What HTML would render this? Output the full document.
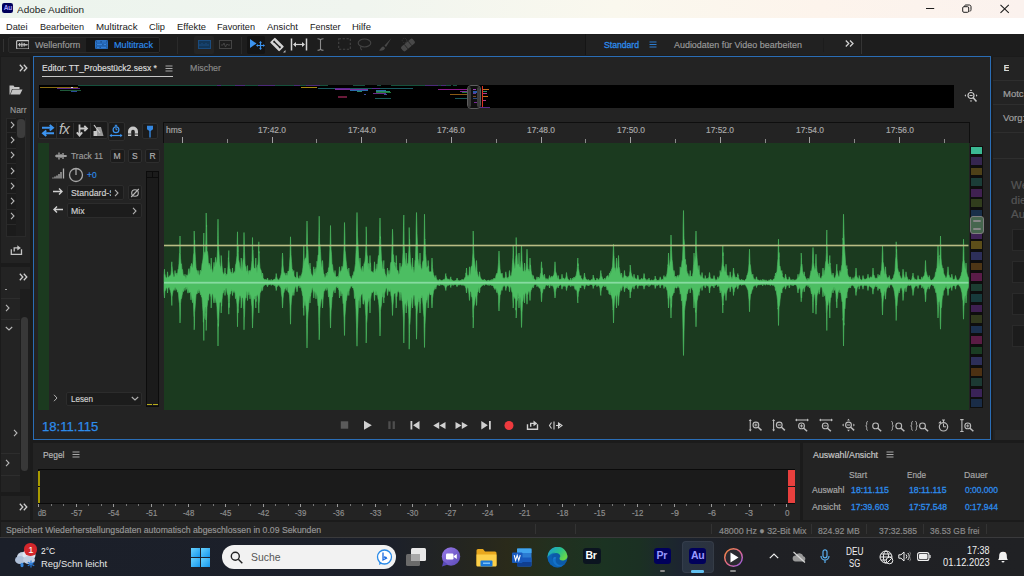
<!DOCTYPE html>
<html><head><meta charset="utf-8"><title>Adobe Audition</title>
<style>
*{box-sizing:border-box;margin:0;padding:0}
html,body{width:1024px;height:576px;overflow:hidden;background:#1b1b1b;font-family:"Liberation Sans",sans-serif;}
.a{position:absolute}
.t{position:absolute;white-space:nowrap;line-height:1;-webkit-text-stroke:0.18px}
#titlebar .t,#menubar .t,.ns{-webkit-text-stroke:0}
#titlebar{left:0;top:0;width:1024px;height:18px;background:linear-gradient(90deg,#ecf4ed 0%,#f0f5ef 35%,#faf8ee 60%,#fdf4ec 80%,#fbf2ee 100%)}
#menubar{left:0;top:18px;width:1024px;height:16px;background:#fff}
#menubar .t{font-size:9.6px;color:#1a1a1a;top:3.5px}
#toolbar{left:0;top:34px;width:1024px;height:22px;background:#1d1d1d}
.panel{background:#232323}
.lbl{font-size:9.5px;color:#a8a8a8}
.blue{color:#2d8ceb;-webkit-text-stroke:0.3px}
</style></head><body>
<!-- title bar -->
<div class="a" id="titlebar">
  <div class="a" style="left:1.900px;top:3.400px;width:11px;height:9.800px;background:#00005b;border-radius:2.200px"></div>
  <div class="t" style="left:3.700px;top:5.100px;font-size:6.600px;font-weight:bold;color:#a8a0ff;letter-spacing:-.3px">Au</div>
  <div class="t" style="transform:scaleX(1.028);transform-origin:0 0;left:17px;top:4.600px;font-size:9.700px;color:#222">Adobe Audition</div>
  <svg class="a" style="left:920px;top:0" width="104" height="18" viewBox="920 0 104 18" fill="none" stroke="#1e1e1e" stroke-width="1">
    <path d="M926 8.500h8.200"/>
    <rect x="962.700" y="6.700" width="6" height="5.600" rx="1.200"/><path d="M964.500 6.500c0-1 0.500-1.500 1.500-1.500h3.300c1 0 1.700 0.700 1.700 1.700v3c0 1-0.500 1.500-1.500 1.500"/>
    <path d="M1000.500 4.800l8.300 8M1008.800 4.800l-8.300 8" stroke-width="1.100"/>
  </svg>
</div>
<!-- menu bar -->
<div class="a" id="menubar">
  <div class="t" style="transform:scaleX(0.960);transform-origin:0 0;left:6px">Datei</div>
  <div class="t" style="transform:scaleX(0.948);transform-origin:0 0;left:39.500px">Bearbeiten</div>
  <div class="t" style="transform:scaleX(1.011);transform-origin:0 0;left:95.500px">Multitrack</div>
  <div class="t" style="transform:scaleX(0.968);transform-origin:0 0;left:148.500px">Clip</div>
  <div class="t" style="transform:scaleX(0.976);transform-origin:0 0;left:176.500px">Effekte</div>
  <div class="t" style="transform:scaleX(0.950);transform-origin:0 0;left:217px">Favoriten</div>
  <div class="t" style="transform:scaleX(0.985);transform-origin:0 0;left:267px">Ansicht</div>
  <div class="t" style="transform:scaleX(0.938);transform-origin:0 0;left:310px">Fenster</div>
  <div class="t" style="transform:scaleX(0.989);transform-origin:0 0;left:352px">Hilfe</div>
</div>
<!-- toolbar -->
<div class="a" id="toolbar">
  <div class="a" style="left:3px;top:5px;width:1px;height:13px;background:#333"></div>
  <div class="a" style="left:7.500px;top:2.500px;width:152.500px;height:16.500px;background:#202020;border:1px solid #2b2b2b;border-radius:2px"></div>
  <div class="a" style="left:86px;top:3.500px;width:73px;height:14.500px;background:#151515;border-radius:1px"></div>
  <!-- waveform icon -->
  <svg class="a" style="left:15.500px;top:5.800px" width="13.600" height="9.600" viewBox="0 0 15 11" preserveAspectRatio="none"><rect x="0.7" y="0.7" width="13.6" height="9.6" rx="1" fill="none" stroke="#c8c8c8" stroke-width="1.2"/><path d="M2 5.5h11M4 3.5v4M6.5 3v5M9 3.5v4M11 4.5v2" stroke="#c8c8c8" stroke-width="1.2"/></svg>
  <div class="t" style="transform:scaleX(0.945);transform-origin:0 0;left:34.700px;top:6px;font-size:9.5px;color:#9a9a9a">Wellenform</div>
  <!-- multitrack icon -->
  <svg class="a" style="left:94.500px;top:5.800px" width="13.600" height="9.600" viewBox="0 0 15 11" preserveAspectRatio="none"><rect x="0.500" y="0.500" width="13.500" height="9.500" rx="1" fill="#1c4f8e" stroke="#2f80de" stroke-width="1"/><path d="M1 3.700h12.500M1 6.900h12.500" stroke="#2f80de" stroke-width="0.800"/><path d="M2 2.200h4M7.500 2.200h5M2 5.300h6M9.500 5.300h3M2 8.400h3M6.500 8.400h6" stroke="#3a8ae6" stroke-width="1.100"/></svg>
  <div class="t" style="transform:scaleX(0.959);transform-origin:0 0;left:113.500px;top:6px;font-size:9.5px;color:#2d8ceb">Multitrack</div>
  <div class="a" style="left:177px;top:3px;width:1px;height:17px;background:#2a2a2a"></div>
  <!-- spectral buttons -->
  <div class="a" style="left:194px;top:2px;width:20px;height:18px;background:#242424;border-radius:2px"></div>
  <svg class="a" style="left:198px;top:6px" width="13" height="9" viewBox="0 0 13 9"><rect x="0.5" y="0.5" width="12" height="8" fill="#123658" stroke="#1a4c80"/><path d="M2 6v-2M4 6v-3M6 6v-2M8 6v-3M10 6v-2" stroke="#1a4c80"/></svg>
  <svg class="a" style="left:219px;top:6px" width="13" height="9" viewBox="0 0 13 9"><rect x="0.5" y="0.5" width="12" height="8" fill="none" stroke="#444"/><path d="M2 5h2l1-2 1.5 4 1.5-3 1 1h2" stroke="#444" fill="none"/></svg>
  <div class="a" style="left:241px;top:3px;width:1px;height:17px;background:#2a2a2a"></div>
  <!-- move tool -->
  <div class="a" style="left:247px;top:2px;width:18px;height:18px;background:#141414;border-radius:2px"></div>
  <svg class="a" style="left:249px;top:4px" width="16" height="14" viewBox="0 0 16 14"><path d="M1 1v9l6.5-4.5z" fill="#3c94f0"/><path d="M11.5 4v7M8 7.5h7" stroke="#3c94f0" stroke-width="1.2"/><path d="M11.5 3l-1.5 1.8h3zM11.5 12l-1.5-1.8h3zM7 7.5l1.8-1.5v3zM16 7.5l-1.8-1.5v3z" fill="#3c94f0"/></svg>
  <!-- razor -->
  <svg class="a" style="left:270px;top:3px" width="16" height="16" viewBox="0 0 16 16"><g transform="rotate(45 7 7.5)"><rect x="0.5" y="4" width="13" height="7" rx="1" fill="#d4d4d4"/><path d="M3 7.5h8" stroke="#1d1d1d" stroke-width="1.4"/><circle cx="3" cy="7.5" r="1" fill="#1d1d1d"/><circle cx="11" cy="7.5" r="1" fill="#1d1d1d"/></g><path d="M15.5 13v2.5h-2.500z" fill="#bbb"/></svg>
  <!-- slip |<->| -->
  <svg class="a" style="left:290px;top:4px" width="18" height="13" viewBox="0 0 18 13"><path d="M1.5 0.500v12M16.500 0.500v12" stroke="#d4d4d4" stroke-width="1.500"/><path d="M4 6.500h10" stroke="#d4d4d4" stroke-width="1.200"/><path d="M3 6.500l3-2.500v5zM15 6.500l-3-2.500v5z" fill="#d4d4d4"/></svg>
  <!-- I-beam -->
  <svg class="a" style="left:316px;top:4px" width="9" height="13" viewBox="0 0 9 13"><path d="M1.500 0.800c1.500 0 3 0.400 3 1.500v8.400c0 1.100-1.500 1.500-3 1.500M7.500 0.800c-1.500 0-3 0.400-3 1.500M7.500 12.200c-1.500 0-3-0.400-3-1.500" fill="none" stroke="#8a8a8a" stroke-width="1.100"/></svg>
  <!-- marquee -->
  <svg class="a" style="left:338px;top:4px" width="13" height="12" viewBox="0 0 13 12"><rect x="0.700" y="0.700" width="11.600" height="10.600" fill="none" stroke="#444" stroke-width="1.100" stroke-dasharray="2.300 1.600"/></svg>
  <!-- lasso -->
  <svg class="a" style="left:357px;top:4px" width="15" height="13" viewBox="0 0 15 13"><ellipse cx="7.500" cy="5" rx="6.300" ry="4" fill="none" stroke="#444" stroke-width="1.100"/><path d="M4 8.500c-1 1.500 0 3 1 3.500" fill="none" stroke="#444" stroke-width="1.100"/></svg>
  <!-- brush -->
  <svg class="a" style="left:378px;top:3px" width="15" height="15" viewBox="0 0 15 15"><path d="M13.500 1l-7 7.500 1.500 1.500z" fill="#484848"/><path d="M5.500 9.500c-2 0-2.500 2-4.500 4 3 0.500 6-0.500 6-2.500z" fill="#484848"/></svg>
  <!-- band-aid -->
  <svg class="a" style="left:400px;top:3px" width="16" height="15" viewBox="0 0 16 15"><g transform="rotate(-40 8 8)"><rect x="0.500" y="5" width="15" height="6" rx="2" fill="#484848"/><path d="M5.500 5v6M10.500 5v6" stroke="#1d1d1d" stroke-width="0.700"/></g><circle cx="4.500" cy="3.500" r="2.300" fill="none" stroke="#3a3a3a" stroke-dasharray="1 1"/></svg>
  <!-- workspace -->
  <div class="a" style="left:586px;top:1px;width:274px;height:20px;background:#212121"></div><div class="a" style="left:585px;top:0;width:1.200px;height:21px;background:#151515"></div>
  <div class="t blue" style="transform:scaleX(0.908);transform-origin:0 0;left:604px;top:6px;font-size:9.500px;color:#2d8ceb">Standard</div>
  <svg class="a" style="left:649px;top:7px" width="8" height="7" viewBox="0 0 8 7"><path d="M0.500 1h7M0.500 3.500h7M0.500 6h7" stroke="#2d7dd2" stroke-width="1.100"/></svg>
  <div class="t" style="transform:scaleX(0.940);transform-origin:0 0;left:673.500px;top:6px;font-size:9.500px;color:#9a9a9a">Audiodaten für Video bearbeiten</div>
  <div class="a" style="left:823px;top:4px;width:1px;height:14px;background:#1c1c1c"></div>
  <svg class="a" style="left:845.200px;top:6.400px" width="9" height="7" viewBox="0 0 9 7"><path d="M0.800 0.500l3 3-3 3M5 0.500l3 3-3 3" fill="none" stroke="#d0d0d0" stroke-width="1.300"/></svg>
  <div class="a" style="left:860.500px;top:0;width:1.200px;height:20px;background:#343434"></div>
</div>

<!-- left strip -->
<div class="a panel" style="left:1px;top:57px;width:28.800px;height:206px"></div>
<div class="a panel" style="left:1px;top:267px;width:28.800px;height:225px"></div>
<div class="a panel" style="left:1px;top:495.500px;width:28.800px;height:24px"></div>
<svg class="a" style="left:18.500px;top:63.500px" width="9" height="8" viewBox="0 0 9 8"><path d="M0.800 0.800l3 3.200-3 3.200M4.800 0.800l3 3.200-3 3.200" fill="none" stroke="#d0d0d0" stroke-width="1.300"/></svg>
<svg class="a" style="left:8.500px;top:85px" width="14" height="10" viewBox="0 0 14 10"><path d="M0.500 9.500v-9h4l1 1.500h5v2h-7.500l-2 5.500z" fill="#c4c4c4"/><path d="M1.500 9.500l2-5h10l-2.500 5z" fill="#c4c4c4"/></svg>
<div class="a" style="left:9.500px;top:103px;width:17.500px;height:13px;overflow:hidden"><div class="t" style="transform:scaleX(0.893);transform-origin:0 0;left:0;top:1.500px;font-size:9.500px;color:#9a9a9a">Narr</div></div>
<div class="a" style="left:5.500px;top:117.500px;width:20px;height:119px;background:#1b1b1b;border:1px solid #2a2a2a"></div>
<div class="a" style="left:16px;top:118px;width:9px;height:118px;background:#1e1e1e"></div>
<div class="a" style="left:17px;top:118.500px;width:7.500px;height:19.500px;background:#3c3c3c;border-radius:3.500px"></div>
<svg class="a" style="left:10px;top:120.8px" width="5" height="8" viewBox="0 0 5 8" fill="none" stroke="#b8b8b8" stroke-width="1.100"><path d="M1 0.800l3 3.200-3 3.200"/></svg><div class="a" style="left:6.500px;top:132.2px;width:9.500px;height:1px;background:#292929"></div><svg class="a" style="left:10px;top:136.0px" width="5" height="8" viewBox="0 0 5 8" fill="none" stroke="#b8b8b8" stroke-width="1.100"><path d="M1 0.800l3 3.200-3 3.200"/></svg><div class="a" style="left:6.500px;top:147.5px;width:9.500px;height:1px;background:#292929"></div><svg class="a" style="left:10px;top:151.2px" width="5" height="8" viewBox="0 0 5 8" fill="none" stroke="#b8b8b8" stroke-width="1.100"><path d="M1 0.800l3 3.200-3 3.200"/></svg><div class="a" style="left:6.500px;top:162.8px;width:9.500px;height:1px;background:#292929"></div><svg class="a" style="left:10px;top:166.5px" width="5" height="8" viewBox="0 0 5 8" fill="none" stroke="#b8b8b8" stroke-width="1.100"><path d="M1 0.800l3 3.200-3 3.200"/></svg><div class="a" style="left:6.500px;top:178.0px;width:9.500px;height:1px;background:#292929"></div><svg class="a" style="left:10px;top:181.8px" width="5" height="8" viewBox="0 0 5 8" fill="none" stroke="#b8b8b8" stroke-width="1.100"><path d="M1 0.800l3 3.200-3 3.200"/></svg><div class="a" style="left:6.500px;top:193.2px;width:9.500px;height:1px;background:#292929"></div><svg class="a" style="left:10px;top:197.0px" width="5" height="8" viewBox="0 0 5 8" fill="none" stroke="#b8b8b8" stroke-width="1.100"><path d="M1 0.800l3 3.200-3 3.200"/></svg><div class="a" style="left:6.500px;top:208.5px;width:9.500px;height:1px;background:#292929"></div><svg class="a" style="left:10px;top:212.2px" width="5" height="8" viewBox="0 0 5 8" fill="none" stroke="#b8b8b8" stroke-width="1.100"><path d="M1 0.800l3 3.200-3 3.200"/></svg><div class="a" style="left:6.500px;top:223.8px;width:9.500px;height:1px;background:#292929"></div>
<svg class="a" style="left:10px;top:244px" width="14" height="12" viewBox="10 244 14 12" fill="none" stroke="#c4c4c4" stroke-width="1.300"><path d="M11.300 249.200v5.200h10.200v-5.200"/><path d="M14.200 251.500v-3.600h4"/><path d="M17.300 245.300l3.600 2.600-3.600 2.600z" fill="#c4c4c4" stroke="none"/></svg>
<div class="a" style="left:5px;top:289.200px;width:2px;height:1px;background:#9a9a9a"></div>
<!-- panel B -->
<svg class="a" style="left:18.500px;top:273px" width="9" height="8" viewBox="0 0 9 8"><path d="M0.800 0.800l3 3.200-3 3.200M4.800 0.800l3 3.200-3 3.200" fill="none" stroke="#d0d0d0" stroke-width="1.300"/></svg>
<div class="a" style="left:1px;top:298px;width:19px;height:1px;background:#2d2d2d"></div>
<div class="a" style="left:1px;top:319px;width:19px;height:1px;background:#2d2d2d"></div>
<div class="a" style="left:1px;top:453px;width:19px;height:1px;background:#2d2d2d"></div>
<div class="a" style="left:1px;top:474.500px;width:19px;height:1px;background:#2d2d2d"></div>
<div class="a" style="left:20px;top:289px;width:9.800px;height:203px;background:#1d1d1d"></div>
<div class="a" style="left:21px;top:317px;width:7px;height:154px;background:#383838;border-radius:3.500px"></div>
<svg class="a" style="left:5px;top:303.500px" width="5" height="8" viewBox="0 0 5 8" fill="none" stroke="#b8b8b8" stroke-width="1.100"><path d="M1 0.800l3 3.200-3 3.200"/></svg>
<svg class="a" style="left:4.500px;top:326px" width="8" height="5" viewBox="0 0 8 5" fill="none" stroke="#b8b8b8" stroke-width="1.100"><path d="M0.800 1l3.200 3 3.200-3"/></svg>
<svg class="a" style="left:13px;top:429px" width="5" height="8" viewBox="0 0 5 8" fill="none" stroke="#b8b8b8" stroke-width="1.100"><path d="M1 0.800l3 3.200-3 3.200"/></svg>
<svg class="a" style="left:5px;top:459px" width="5" height="8" viewBox="0 0 5 8" fill="none" stroke="#b8b8b8" stroke-width="1.100"><path d="M1 0.800l3 3.200-3 3.200"/></svg>
<!-- panel C -->
<svg class="a" style="left:18.500px;top:502.500px" width="9" height="8" viewBox="0 0 9 8"><path d="M0.800 0.800l3 3.200-3 3.200M4.800 0.800l3 3.200-3 3.200" fill="none" stroke="#d0d0d0" stroke-width="1.300"/></svg>


<!-- editor panel -->
<div class="a panel" style="left:33px;top:56px;width:958px;height:384px;border:1px solid #2a6db5"></div>
<!-- tabs -->
<div class="t" style="transform:scaleX(0.897);transform-origin:0 0;left:42px;top:63px;font-size:9.5px;color:#dcdcdc">Editor: TT_Probestück2.sesx *</div>
<div class="a" style="left:41.700px;top:75.500px;width:131px;height:1.700px;background:#c6c6c6"></div>
<svg class="a" style="left:165px;top:65px" width="8" height="7" viewBox="0 0 8 7"><path d="M0.500 1h7M0.500 3.500h7M0.500 6h7" stroke="#a8a8a8" stroke-width="1"/></svg>
<div class="t" style="transform:scaleX(0.932);transform-origin:0 0;left:190px;top:63px;font-size:9.5px;color:#8a8a8a">Mischer</div>
<!-- overview -->
<div class="a" style="left:39px;top:85px;width:915px;height:22.700px;background:#000"></div>
<svg class="a" style="left:39px;top:84px" width="915" height="25" viewBox="39 84 915 25" shape-rendering="crispEdges" stroke-width="1">
 <path d="M78 85.500H328M353 85.500H365M377 85.500H381M391 85.500H431M437 85.500H451M453 85.500H457" stroke="#15503c"/>
 <path d="M216.500 85.500H221M235 85.500H244.700M258 85.500H275M294 85.500H300M306 85.500H320M425 85.500H438M441 85.500H446" stroke="#4a2a78"/>
 <path d="M39.500 87H78" stroke="#8a6e14" stroke-width="1"/><path d="M71 87h1.500" stroke="#e0e0e0"/>
 <path d="M301 87.200H317" stroke="#a88a14" stroke-width="1.200"/>
 <path d="M318 88.200H413" stroke="#1a5a60"/><path d="M335 88.200H350M372 88.200H380" stroke="#5a2a90"/>
 <path d="M57 88.800H79.500" stroke="#5a2a8a"/><path d="M59.500 90.500H80.500" stroke="#1f5a3a"/><path d="M70.500 91.500H77" stroke="#2a4a9a"/>
 <path d="M335 89.500H368" stroke="#7a2a9a"/><path d="M438 89.500H468" stroke="#8a1a8a"/>
 <path d="M350 90.500H368M376 90.500H386" stroke="#2a6aa8"/><path d="M357 91.500H362M376 91.500H390" stroke="#2a8a6a"/>
 <path d="M376 92H391" stroke="#1f7a3a"/><path d="M373 93.800H386" stroke="#6a2a8a"/><path d="M364 94.500H366M384 94.500H387" stroke="#3a4a9a"/>
 <path d="M338 97H347" stroke="#6a1a3a" stroke-width="1.300"/><path d="M375 98.300H391" stroke="#1a5a5a"/>
 <path d="M450 94.200H468" stroke="#8a5a14"/><path d="M462 92H468" stroke="#1f7a3a"/><path d="M455 98.300H468" stroke="#1a5a5a"/><path d="M460 91H468" stroke="#7a2a9a"/>
 
 <path d="M483 89.500H489M483 96H488" stroke="#c86a1a"/><path d="M483 93H487M483 100H486" stroke="#b03a8a"/><path d="M479 107H490" stroke="#5a2a8a"/><path d="M483 91.500H487" stroke="#2a8a6a"/>
</svg>
<!-- overview handle -->
<div class="a" style="left:467px;top:84.500px;width:14.300px;height:24.500px;background:#101010;border:1.300px solid #5e5e5e;border-radius:4px"></div>
<div class="a" style="left:468.300px;top:86.500px;width:3px;height:20.500px;background:#3c3c3c;border-radius:1.500px"></div>
<div class="a" style="left:477.200px;top:86.500px;width:3px;height:20.500px;background:#3c3c3c;border-radius:1.500px"></div>
<div class="a" style="left:472.800px;top:89px;width:3.400px;height:1px;background:#a040b0"></div>
<div class="a" style="left:472.500px;top:90.500px;width:4px;height:2px;background:#2a5aa8"></div>
<div class="a" style="left:473px;top:93px;width:2.500px;height:1px;background:#6a3a9a"></div>
<div class="a" style="left:472.500px;top:95.500px;width:3.500px;height:1.500px;background:#7a4a2a"></div>
<div class="a" style="left:472.500px;top:98px;width:4px;height:1px;background:#2a4a7a"></div>
<div class="a" style="left:473.500px;top:102px;width:3px;height:1.200px;background:#7a2a9a"></div>
<div class="a" style="left:481.800px;top:86.200px;width:1.700px;height:20.700px;background:#dc3222"></div>
<!-- zoom nav icon -->
<svg class="a" style="left:964px;top:89px" width="15" height="15" viewBox="0 0 15 15" fill="none" stroke="#c8c8c8"><circle cx="7" cy="6.500" r="3" stroke-width="1.200"/><path d="M5.500 6.500h3" stroke-width="1"/><path d="M9.200 8.800l3.300 3.700" stroke-width="1.600"/><path d="M7 0.500l-1.300 1.500h2.600zM7 13l-1.300-1.500h2.600zM0.500 6.500l1.500-1.300v2.600zM13.500 6.500l-1.500-1.300v2.600z" fill="#c8c8c8" stroke="none"/></svg>

<!-- track toolbar -->
<div class="a" style="left:38.200px;top:121.200px;width:69.500px;height:17.500px;background:#1b1b1b;border:1px solid #2e2e2e;border-radius:2px"></div>
<div class="a" style="left:56px;top:123px;width:1px;height:15px;background:#2e2e2e"></div>
<div class="a" style="left:73px;top:123px;width:1px;height:15px;background:#2e2e2e"></div>
<div class="a" style="left:90px;top:123px;width:1px;height:15px;background:#2e2e2e"></div>
<div class="a" style="left:107.500px;top:122px;width:17px;height:18.500px;background:#1b1b1b;border:1px solid #2e2e2e;border-radius:2px"></div>
<div class="a" style="left:141.500px;top:123px;width:16.300px;height:16px;background:#1b1b1b;border:1px solid #2e2e2e;border-radius:2px"></div>
<!-- swap arrows -->
<svg class="a" style="left:41px;top:124px" width="14" height="13" viewBox="0 0 14 13" fill="none" stroke="#3c94f0" stroke-width="1.900"><path d="M1 3.700h10M8.700 1l3.300 2.700-3.300 2.700"/><path d="M13 9.300h-10M5.300 6.600l-3.300 2.700 3.300 2.700"/></svg>
<div class="t" style="left:59px;top:122px;font-size:14.500px;font-style:italic;color:#bcbcbc;letter-spacing:-.6px;-webkit-text-stroke:0">fx</div>
<svg class="a" style="left:75px;top:124px" width="14" height="13" viewBox="0 0 14 13" fill="none" stroke="#c8c8c8" stroke-width="1.800"><path d="M4.500 0.500v10M1.800 8.300l2.700 3.200 2.700-3.200M4.500 4.500h7M9.300 1.800l2.700 2.700-2.700 2.700"/></svg>
<svg class="a" style="left:92px;top:124px" width="14" height="13" viewBox="0 0 14 13"><path d="M5 3h4l2.500 9h-9z" fill="#9a9a9a"/><path d="M2 1l6 8" stroke="#c8c8c8" stroke-width="1.200"/><rect x="1.500" y="7" width="3.500" height="5" fill="#c8c8c8"/></svg>
<svg class="a" style="left:109px;top:123px" width="14" height="16" viewBox="0 0 14 16" fill="none" stroke="#3c94f0"><circle cx="7" cy="6.700" r="2.900" stroke-width="1.200"/><path d="M7 5v1.700h1.400M5.800 2.300h2.400M7 2.300v1.300" stroke-width="1"/><path d="M1.500 12.500h11" stroke-width="1.200"/><path d="M0.500 12.500l2.200-1.700v3.400zM13.500 12.500l-2.200-1.700v3.400z" fill="#3c94f0" stroke="none"/></svg>
<svg class="a" style="left:127px;top:126px" width="12" height="11" viewBox="0 0 12 11"><path d="M1 10v-4.500a5 5 0 0 1 10 0v4.500h-3.200v-4.500a1.800 1.800 0 0 0 -3.600 0v4.500z" fill="#c8c8c8"/><path d="M1 8h3.200M7.800 8h3.200" stroke="#1d1d1d" stroke-width="0.800"/></svg>
<svg class="a" style="left:145px;top:124px" width="10" height="14" viewBox="0 0 10 14"><path d="M2 1.700h6v3.600l-2.300 1.700h-1.400l-2.300-1.700z" fill="#3487e0"/><path d="M5 6.500v7" stroke="#3487e0" stroke-width="1.400"/></svg>

<!-- ruler -->
<div class="a" style="left:163px;top:122px;width:806.500px;height:21px;background:#232323;border-top:1.500px solid #0e0e0e;border-left:1.500px solid #0e0e0e;border-right:1px solid #0e0e0e"></div>
<div class="t" style="transform:scaleX(0.940);transform-origin:0 0;left:166px;top:125.500px;font-size:9px;color:#a8a8a8">hms</div>
<div class="a" style="left:182.0px;top:136.500px;width:1px;height:6.500px;background:#a0a0a0"></div><div class="a" style="left:226.8px;top:139px;width:1px;height:4px;background:#8a8a8a"></div><div class="a" style="left:271.6px;top:136.500px;width:1px;height:6.500px;background:#a0a0a0"></div><div class="a" style="left:316.4px;top:139px;width:1px;height:4px;background:#8a8a8a"></div><div class="t" style="transform:scaleX(0.932);transform-origin:0 0;left:258.1px;top:125.500px;font-size:9px;color:#a8a8a8">17:42.0</div><div class="a" style="left:361.2px;top:136.500px;width:1px;height:6.500px;background:#a0a0a0"></div><div class="a" style="left:406.1px;top:139px;width:1px;height:4px;background:#8a8a8a"></div><div class="t" style="transform:scaleX(0.932);transform-origin:0 0;left:347.7px;top:125.500px;font-size:9px;color:#a8a8a8">17:44.0</div><div class="a" style="left:450.9px;top:136.500px;width:1px;height:6.500px;background:#a0a0a0"></div><div class="a" style="left:495.7px;top:139px;width:1px;height:4px;background:#8a8a8a"></div><div class="t" style="transform:scaleX(0.932);transform-origin:0 0;left:437.4px;top:125.500px;font-size:9px;color:#a8a8a8">17:46.0</div><div class="a" style="left:540.5px;top:136.500px;width:1px;height:6.500px;background:#a0a0a0"></div><div class="a" style="left:585.3px;top:139px;width:1px;height:4px;background:#8a8a8a"></div><div class="t" style="transform:scaleX(0.932);transform-origin:0 0;left:527.0px;top:125.500px;font-size:9px;color:#a8a8a8">17:48.0</div><div class="a" style="left:630.1px;top:136.500px;width:1px;height:6.500px;background:#a0a0a0"></div><div class="a" style="left:674.9px;top:139px;width:1px;height:4px;background:#8a8a8a"></div><div class="t" style="transform:scaleX(0.932);transform-origin:0 0;left:616.6px;top:125.500px;font-size:9px;color:#a8a8a8">17:50.0</div><div class="a" style="left:719.7px;top:136.500px;width:1px;height:6.500px;background:#a0a0a0"></div><div class="a" style="left:764.5px;top:139px;width:1px;height:4px;background:#8a8a8a"></div><div class="t" style="transform:scaleX(0.932);transform-origin:0 0;left:706.2px;top:125.500px;font-size:9px;color:#a8a8a8">17:52.0</div><div class="a" style="left:809.3px;top:136.500px;width:1px;height:6.500px;background:#a0a0a0"></div><div class="a" style="left:854.2px;top:139px;width:1px;height:4px;background:#8a8a8a"></div><div class="t" style="transform:scaleX(0.932);transform-origin:0 0;left:795.8px;top:125.500px;font-size:9px;color:#a8a8a8">17:54.0</div><div class="a" style="left:899.0px;top:136.500px;width:1px;height:6.500px;background:#a0a0a0"></div><div class="a" style="left:943.8px;top:139px;width:1px;height:4px;background:#8a8a8a"></div><div class="t" style="transform:scaleX(0.932);transform-origin:0 0;left:885.5px;top:125.500px;font-size:9px;color:#a8a8a8">17:56.0</div>

<!-- track area -->
<div class="a" style="left:38.300px;top:143px;width:10.700px;height:267px;background:#1b3a1f"></div>
<div class="a" style="left:49px;top:143px;width:115px;height:267px;background:#232323"></div>
<div class="a" style="left:164px;top:143px;width:805px;height:267px;background:#1b3a1f"></div>
<div class="a" style="left:970.300px;top:145.700px;width:12.600px;height:262px;background:#0e0e0e"></div>
<div class="a" style="left:971.200px;top:146.75px;width:11px;height:7.7px;background:#3bb893"></div><div class="a" style="left:971.200px;top:157.28px;width:11px;height:7.7px;background:#35264f"></div><div class="a" style="left:971.200px;top:167.80px;width:11px;height:7.7px;background:#4e4118"></div><div class="a" style="left:971.200px;top:178.33px;width:11px;height:7.7px;background:#1b3d38"></div><div class="a" style="left:971.200px;top:188.86px;width:11px;height:7.7px;background:#402151"></div><div class="a" style="left:971.200px;top:199.38px;width:11px;height:7.7px;background:#313d1d"></div><div class="a" style="left:971.200px;top:209.91px;width:11px;height:7.7px;background:#192f49"></div><div class="a" style="left:971.200px;top:220.44px;width:11px;height:7.7px;background:#3f6a4a"></div><div class="a" style="left:971.200px;top:230.97px;width:11px;height:7.7px;background:#3f2455"></div><div class="a" style="left:971.200px;top:241.49px;width:11px;height:7.7px;background:#5c4e19"></div><div class="a" style="left:971.200px;top:252.02px;width:11px;height:7.7px;background:#2d2f59"></div><div class="a" style="left:971.200px;top:262.55px;width:11px;height:7.7px;background:#4e3616"></div><div class="a" style="left:971.200px;top:273.07px;width:11px;height:7.7px;background:#5a1c48"></div><div class="a" style="left:971.200px;top:283.60px;width:11px;height:7.7px;background:#1b3d31"></div><div class="a" style="left:971.200px;top:294.13px;width:11px;height:7.7px;background:#173a3b"></div><div class="a" style="left:971.200px;top:304.65px;width:11px;height:7.7px;background:#3e2051"></div><div class="a" style="left:971.200px;top:315.18px;width:11px;height:7.7px;background:#31391d"></div><div class="a" style="left:971.200px;top:325.71px;width:11px;height:7.7px;background:#1b304d"></div><div class="a" style="left:971.200px;top:336.24px;width:11px;height:7.7px;background:#5a1c44"></div><div class="a" style="left:971.200px;top:346.76px;width:11px;height:7.7px;background:#1a3d23"></div><div class="a" style="left:971.200px;top:357.29px;width:11px;height:7.7px;background:#2d2f59"></div><div class="a" style="left:971.200px;top:367.82px;width:11px;height:7.7px;background:#4d3113"></div><div class="a" style="left:971.200px;top:378.34px;width:11px;height:7.7px;background:#1c3933"></div><div class="a" style="left:971.200px;top:388.87px;width:11px;height:7.7px;background:#3a2358"></div><div class="a" style="left:971.200px;top:399.40px;width:11px;height:7.7px;background:#1a2c47"></div>
<!-- scroll handle -->
<div class="a" style="left:970px;top:216px;width:14px;height:17.500px;background:#46664e;border:1.500px solid #7e7e7e;border-radius:3px"></div>
<div class="a" style="left:973px;top:219.500px;width:8px;height:2px;background:#868686;border-radius:1px"></div>
<div class="a" style="left:973px;top:228px;width:8px;height:2px;background:#868686;border-radius:1px"></div>

<svg class="a" style="left:0;top:0" width="1024" height="576" viewBox="0 0 1024 576">
  <path d="M164.0 282.6L164.0 275.4L164.2 273.3L164.5 269.2L164.8 274.7L165.0 274.4L165.5 276.7L166.0 277.6L166.5 278.3L167.0 277.2L167.2 276.3L167.5 271.8L167.8 274.6L168.0 276.9L168.5 277.3L169.0 277.3L169.5 275.8L170.0 276.1L170.5 275.3L171.0 274.2L171.4 270.5L171.5 266.4L171.8 261.8L172.0 266.1L172.1 266.2L172.5 270.9L173.0 273.5L173.5 276.5L174.0 277.1L174.5 276.6L174.7 275.6L175.0 270.5L175.3 274.0L175.5 274.0L176.0 273.3L176.5 276.1L177.0 272.9L177.5 275.5L178.0 269.5L178.5 268.7L179.0 263.6L179.5 253.1L179.7 252.9L180.0 236.0L180.3 253.3L180.5 258.1L181.0 264.3L181.5 263.8L182.0 270.5L182.5 269.5L183.0 273.7L183.5 275.9L184.0 275.7L184.5 276.5L184.7 277.0L185.0 274.2L185.3 277.2L185.5 276.9L186.0 278.7L186.5 275.2L187.0 274.7L187.5 275.8L188.0 275.5L188.5 270.0L189.0 268.6L189.5 273.7L190.0 273.2L190.5 266.4L191.0 265.7L191.5 263.4L192.0 267.2L192.5 268.1L193.0 263.1L193.5 254.8L193.9 252.9L194.0 240.5L194.2 231.0L194.5 242.5L194.6 240.2L195.0 251.0L195.5 259.5L196.0 267.4L196.5 270.5L197.0 270.1L197.5 271.2L198.0 274.0L198.4 274.5L198.5 274.7L198.8 270.5L199.0 273.2L199.1 273.9L199.5 276.1L200.0 274.4L200.5 270.1L201.0 271.5L201.5 270.6L202.0 264.2L202.5 262.3L203.0 259.0L203.4 254.0L203.5 251.7L203.8 233.0L204.0 249.4L204.1 252.2L204.5 254.4L205.0 251.8L205.5 254.2L205.9 239.1L206.0 227.4L206.2 213.0L206.5 227.0L206.6 225.2L207.0 251.0L207.5 251.8L208.0 255.9L208.5 266.2L209.0 263.0L209.5 265.1L210.0 264.6L210.5 269.9L210.9 268.8L211.0 265.6L211.2 258.0L211.5 265.6L211.6 268.1L212.0 269.5L212.5 272.7L213.0 271.9L213.5 267.8L214.0 262.3L214.5 267.0L215.0 266.5L215.5 257.4L216.0 259.9L216.5 264.1L217.0 261.5L217.5 249.3L217.7 235.4L218.0 219.2L218.3 238.8L218.5 246.3L219.0 253.1L219.5 261.6L220.0 265.3L220.5 269.1L220.9 266.1L221.0 266.0L221.2 255.5L221.5 260.0L221.6 261.0L222.0 265.8L222.5 271.2L223.0 272.8L223.5 274.8L224.0 274.1L224.5 273.2L224.7 272.3L225.0 268.0L225.3 273.8L225.5 273.0L226.0 275.9L226.5 274.4L227.0 274.6L227.5 273.2L228.0 266.4L228.4 257.7L228.5 259.2L228.8 250.5L229.0 261.2L229.1 261.6L229.5 268.3L230.0 268.8L230.5 272.3L231.0 272.0L231.5 272.9L232.0 274.3L232.2 273.1L232.5 268.0L232.8 273.7L233.0 274.0L233.5 273.1L234.0 273.0L234.5 271.6L235.0 273.5L235.5 265.3L236.0 263.6L236.5 260.1L237.0 255.5L237.2 242.8L237.5 231.8L237.8 252.0L238.0 245.8L238.5 259.2L239.0 261.5L239.5 264.3L240.0 267.9L240.5 270.2L240.9 265.4L241.0 261.8L241.2 258.0L241.5 260.6L241.6 266.6L242.0 271.1L242.5 266.8L243.0 260.5L243.5 257.5L243.7 251.2L244.0 232.5L244.3 244.3L244.5 251.0L245.0 263.3L245.5 267.2L246.0 266.4L246.5 272.0L247.0 271.1L247.2 273.2L247.5 265.5L247.8 272.7L248.0 270.6L248.5 275.5L249.0 271.6L249.5 270.7L250.0 270.3L250.5 272.3L251.0 269.5L251.5 266.1L252.0 260.2L252.2 251.8L252.5 237.5L252.8 251.4L253.0 250.5L253.5 262.9L254.0 267.6L254.5 268.9L255.0 268.0L255.4 269.0L255.5 263.3L255.8 258.0L256.0 260.6L256.1 267.0L256.5 268.1L257.0 273.1L257.5 265.4L258.0 264.3L258.4 259.0L258.5 253.7L258.8 241.8L259.0 253.3L259.1 251.4L259.5 261.9L260.0 268.1L260.5 269.3L261.0 270.3L261.5 273.0L262.0 276.6L262.1 274.8L262.5 273.0L262.9 275.1L263.0 277.6L263.5 278.6L264.0 279.2L264.5 279.4L265.0 280.2L265.5 279.3L266.0 280.3L266.5 279.8L267.0 280.1L267.1 279.6L267.5 278.0L267.9 279.1L268.0 279.9L268.5 280.2L269.0 281.1L269.5 279.8L270.0 280.7L270.5 280.6L270.9 280.2L271.0 280.2L271.2 279.2L271.5 280.4L271.6 280.2L272.0 280.9L272.5 280.3L273.0 279.8L273.5 280.1L274.0 279.2L274.5 279.3L275.0 279.2L275.5 278.9L275.9 276.4L276.0 275.0L276.2 273.5L276.5 275.4L276.6 276.5L277.0 278.2L277.5 279.3L278.0 279.5L278.5 280.0L279.0 280.2L279.5 278.9L279.6 279.2L280.0 277.8L280.4 277.4L280.5 276.7L281.0 274.9L281.5 272.4L282.0 266.0L282.1 260.3L282.5 253.0L282.9 258.8L283.0 264.9L283.5 270.1L284.0 273.5L284.5 272.7L285.0 274.3L285.5 275.8L285.9 275.3L286.0 276.4L286.2 273.0L286.5 276.1L286.6 275.8L287.0 275.5L287.5 274.5L288.0 271.0L288.5 271.3L289.0 270.8L289.5 265.4L290.0 256.8L290.1 252.3L290.5 236.8L290.9 250.7L291.0 254.6L291.5 261.5L292.0 268.7L292.5 269.5L293.0 272.4L293.4 272.3L293.5 272.7L293.8 270.5L294.0 274.5L294.1 275.4L294.5 276.8L295.0 276.9L295.5 277.6L296.0 278.4L296.5 277.1L296.6 274.9L297.0 271.8L297.4 274.6L297.5 275.7L298.0 277.6L298.5 278.4L299.0 279.0L299.5 278.1L299.6 277.5L300.0 275.5L300.4 277.5L300.5 279.0L301.0 277.1L301.5 275.0L302.0 273.3L302.5 271.2L303.0 267.1L303.4 260.6L303.5 258.9L303.8 245.5L304.0 250.5L304.1 258.8L304.5 262.5L305.0 259.2L305.5 257.8L306.0 258.7L306.5 252.8L306.6 241.0L307.0 221.0L307.4 237.1L307.5 246.7L308.0 250.5L308.5 263.3L309.0 265.2L309.5 269.7L309.6 271.3L310.0 263.0L310.4 270.0L310.5 269.1L311.0 273.1L311.5 274.7L312.0 274.7L312.5 276.9L313.0 275.7L313.4 271.6L313.5 268.9L313.8 266.8L314.0 269.5L314.1 272.6L314.5 273.0L315.0 268.9L315.5 274.7L316.0 267.4L316.5 272.0L317.0 261.2L317.5 264.7L318.0 254.9L318.5 255.0L318.9 233.1L319.0 228.1L319.2 216.2L319.5 237.3L319.6 244.0L320.0 244.8L320.5 251.5L321.0 260.6L321.5 265.9L322.0 267.6L322.1 266.0L322.5 260.5L322.9 265.6L323.0 268.8L323.5 273.6L324.0 273.8L324.5 276.8L325.0 277.5L325.5 277.0L325.9 275.6L326.0 275.8L326.2 273.0L326.5 276.0L326.6 275.9L327.0 276.0L327.5 272.0L328.0 272.9L328.5 267.8L329.0 268.0L329.5 260.0L330.0 245.2L330.1 247.4L330.5 225.5L330.9 245.0L331.0 249.1L331.5 254.3L332.0 265.2L332.5 264.6L333.0 269.2L333.5 272.8L334.0 272.4L334.5 275.0L334.6 275.6L335.0 270.5L335.4 273.9L335.5 275.8L336.0 276.5L336.5 277.0L337.0 276.9L337.5 276.1L338.0 278.0L338.5 276.4L339.0 272.9L339.1 271.5L339.5 266.8L339.9 271.3L340.0 271.1L340.5 272.9L341.0 270.4L341.5 270.7L342.0 266.2L342.5 269.1L343.0 266.9L343.5 260.3L344.0 249.0L344.1 246.1L344.5 222.5L344.9 235.8L345.0 250.0L345.5 253.8L346.0 260.1L346.5 264.4L347.0 268.8L347.5 269.4L348.0 271.8L348.4 273.8L348.5 273.8L348.8 268.0L349.0 271.7L349.1 272.9L349.5 276.1L350.0 276.1L350.5 277.7L351.0 278.2L351.5 279.9L352.0 278.1L352.1 277.2L352.5 275.5L352.9 276.7L353.0 276.5L353.5 273.2L354.0 271.5L354.5 272.6L355.0 267.0L355.5 263.4L356.0 252.1L356.5 242.7L356.6 230.4L357.0 212.5L357.4 231.0L357.5 235.9L358.0 245.0L358.5 254.1L359.0 261.7L359.5 267.1L359.6 264.7L360.0 258.0L360.4 266.6L360.5 267.2L361.0 269.4L361.5 272.0L362.0 268.1L362.5 266.2L363.0 272.5L363.5 270.3L364.0 263.7L364.5 263.2L365.0 261.0L365.5 254.9L365.9 246.1L366.0 246.3L366.2 226.8L366.5 235.0L366.6 246.8L367.0 255.0L367.5 256.7L368.0 267.8L368.5 263.4L369.0 270.5L369.5 264.5L369.6 265.2L370.0 255.5L370.4 267.0L370.5 262.8L371.0 271.9L371.5 271.5L372.0 271.5L372.5 272.1L373.0 272.5L373.5 273.3L374.0 269.7L374.1 268.0L374.5 261.8L374.9 266.1L375.0 270.2L375.5 272.5L376.0 268.8L376.5 269.8L377.0 263.9L377.5 271.1L378.0 259.6L378.5 255.5L379.0 256.9L379.5 240.2L379.6 238.2L380.0 218.0L380.4 238.5L380.5 236.6L381.0 249.7L381.5 259.8L382.0 261.8L382.5 268.3L383.0 268.8L383.4 269.3L383.5 266.6L383.8 260.5L384.0 268.2L384.1 268.6L384.5 269.3L385.0 273.4L385.5 274.5L386.0 276.4L386.5 277.7L387.0 274.6L387.1 271.9L387.5 268.0L387.9 273.6L388.0 273.5L388.5 274.6L389.0 270.3L389.5 275.1L390.0 273.7L390.5 264.3L391.0 262.0L391.5 261.4L392.0 246.8L392.1 245.4L392.5 229.2L392.9 238.9L393.0 254.7L393.5 254.7L394.0 262.9L394.5 262.3L395.0 266.4L395.5 269.2L395.9 262.9L396.0 264.4L396.2 255.5L396.5 260.6L396.6 265.7L397.0 269.7L397.5 270.2L398.0 270.8L398.5 274.3L399.0 274.2L399.5 272.8L399.6 268.6L400.0 263.0L400.4 270.5L400.5 271.1L401.0 266.6L401.5 268.4L402.0 265.6L402.5 262.4L403.0 252.6L403.4 230.9L403.5 225.9L403.8 215.0L404.0 225.2L404.1 243.6L404.5 250.9L405.0 258.2L405.5 263.6L405.9 265.1L406.0 260.0L406.2 253.0L406.5 257.4L406.6 265.1L407.0 265.7L407.5 263.5L408.0 264.8L408.5 257.2L408.9 250.1L409.0 247.0L409.2 227.5L409.5 240.3L409.6 239.5L410.0 251.2L410.5 261.6L411.0 265.1L411.5 268.2L412.0 269.8L412.1 267.7L412.5 258.0L412.9 268.3L413.0 267.1L413.5 269.9L414.0 273.1L414.5 269.4L414.6 269.0L415.0 260.5L415.4 261.3L415.5 256.7L416.0 241.9L416.1 231.4L416.5 212.5L416.9 228.0L417.0 233.3L417.5 245.3L418.0 258.3L418.5 262.4L419.0 266.3L419.5 262.7L419.6 262.0L420.0 253.0L420.4 263.6L420.5 263.8L421.0 267.9L421.5 269.0L422.0 269.8L422.5 263.0L423.0 261.0L423.5 259.9L424.0 244.6L424.1 243.9L424.5 214.2L424.9 239.7L425.0 239.1L425.5 253.5L426.0 258.1L426.5 266.5L427.0 267.7L427.5 266.4L427.9 266.5L428.0 264.2L428.2 260.5L428.5 268.1L428.6 265.8L429.0 271.5L429.5 271.8L430.0 272.2L430.5 271.7L431.0 271.7L431.5 271.0L431.6 266.3L432.0 258.0L432.4 264.7L432.5 267.4L433.0 271.8L433.5 274.4L434.0 275.6L434.5 277.3L435.0 277.8L435.4 278.2L435.5 276.5L435.8 275.5L436.0 277.0L436.1 277.1L436.5 278.8L437.0 279.9L437.5 279.9L438.0 280.7L438.5 280.4L439.0 280.4L439.1 279.8L439.5 279.2L439.9 279.8L440.0 280.3L440.5 280.1L441.0 280.3L441.5 280.5L442.0 280.9L442.5 280.1L443.0 279.9L443.5 279.4L444.0 280.3L444.5 279.3L445.0 278.8L445.4 277.1L445.5 274.7L445.8 273.5L446.0 276.6L446.1 276.2L446.5 277.3L447.0 278.6L447.5 279.9L448.0 278.8L448.5 279.9L449.0 279.2L449.5 280.2L450.0 279.9L450.4 278.2L450.5 277.8L450.8 276.8L451.0 278.5L451.1 278.9L451.5 279.5L452.0 280.5L452.5 280.4L453.0 280.5L453.5 281.1L454.0 280.8L454.5 280.9L455.0 280.5L455.5 280.5L456.0 280.3L456.5 280.0L456.6 279.9L457.0 278.0L457.4 278.8L457.5 279.8L458.0 280.4L458.5 280.4L459.0 280.6L459.5 280.9L460.0 280.3L460.5 280.7L461.0 280.0L461.5 280.8L461.6 280.3L462.0 279.2L462.4 280.2L462.5 279.9L463.0 279.8L463.5 280.3L464.0 279.0L464.5 278.5L465.0 277.4L465.5 276.7L466.0 272.9L466.1 274.5L466.5 268.0L466.9 274.0L467.0 274.5L467.5 275.4L468.0 277.1L468.5 275.5L469.0 275.0L469.1 273.8L469.5 266.8L469.9 270.5L470.0 273.1L470.5 275.9L471.0 267.5L471.5 266.1L472.0 266.2L472.5 259.2L472.9 252.9L473.0 241.9L473.2 231.0L473.5 242.5L473.6 248.2L474.0 257.2L474.5 260.6L475.0 266.1L475.5 270.0L476.0 271.5L476.1 266.3L476.5 260.5L476.9 267.3L477.0 270.7L477.5 273.6L478.0 275.4L478.5 277.2L479.0 276.7L479.1 276.3L479.5 271.8L479.9 274.8L480.0 276.0L480.5 277.9L481.0 278.3L481.5 279.8L482.0 279.4L482.5 280.3L483.0 279.8L483.5 280.2L484.0 280.1L484.1 280.5L484.5 279.2L484.9 280.4L485.0 279.9L485.5 280.6L486.0 280.4L486.5 281.1L487.0 281.2L487.5 281.0L487.9 280.0L488.0 280.7L488.2 280.5L488.5 280.6L488.6 279.9L489.0 280.6L489.5 281.0L490.0 280.6L490.5 280.0L491.0 280.4L491.5 280.3L491.6 280.3L492.0 279.2L492.4 280.0L492.5 280.3L493.0 280.3L493.5 278.8L494.0 278.1L494.5 278.7L495.0 278.4L495.5 277.9L496.0 275.3L496.5 274.0L497.0 273.1L497.5 274.2L498.0 268.9L498.5 262.7L498.6 260.0L499.0 251.0L499.4 259.9L499.5 260.9L500.0 268.8L500.5 272.5L501.0 273.8L501.5 274.3L501.6 274.7L502.0 273.0L502.4 275.1L502.5 276.1L503.0 278.5L503.5 277.9L504.0 278.2L504.5 278.8L505.0 277.4L505.4 276.4L505.5 274.5L505.8 271.8L506.0 274.2L506.1 273.8L506.5 277.6L507.0 277.8L507.5 277.7L508.0 279.3L508.5 276.9L509.0 276.7L509.1 273.4L509.5 270.5L509.9 273.9L510.0 276.4L510.5 275.7L511.0 276.4L511.5 274.5L512.0 271.1L512.5 262.5L512.9 257.4L513.0 252.6L513.2 245.5L513.5 250.5L513.6 258.4L514.0 262.9L514.5 267.4L515.0 268.8L515.5 261.8L515.9 255.5L516.0 255.3L516.2 237.5L516.5 252.2L516.6 253.1L517.0 255.0L517.5 263.9L518.0 264.4L518.5 263.9L518.6 266.0L519.0 253.0L519.4 264.3L519.5 266.0L520.0 266.9L520.5 267.4L521.0 260.5L521.1 254.7L521.5 245.5L521.9 255.2L522.0 260.8L522.5 266.2L523.0 271.5L523.5 271.5L524.0 270.9L524.1 271.8L524.5 263.0L524.9 267.7L525.0 271.8L525.5 270.9L526.0 269.6L526.5 262.3L526.6 258.5L527.0 249.2L527.4 256.9L527.5 263.4L528.0 269.4L528.5 269.4L529.0 271.4L529.5 270.5L529.6 268.8L530.0 258.0L530.4 267.5L530.5 264.9L531.0 270.2L531.5 273.8L532.0 274.8L532.5 276.0L532.9 278.5L533.0 276.7L533.2 275.5L533.5 276.9L533.6 278.0L534.0 279.2L534.5 279.1L535.0 280.0L535.5 280.2L536.0 280.1L536.5 279.2L536.6 278.5L537.0 276.8L537.4 277.9L537.5 278.5L538.0 279.4L538.5 277.0L539.0 278.8L539.5 278.5L540.0 277.3L540.5 274.0L541.0 272.6L541.1 267.8L541.5 261.8L541.9 270.5L542.0 267.8L542.5 274.3L543.0 274.7L543.5 276.6L544.0 277.4L544.1 277.6L544.5 274.2L544.9 277.2L545.0 277.4L545.5 279.0L546.0 279.5L546.5 278.6L547.0 279.9L547.5 278.7L548.0 279.9L548.5 279.4L549.0 277.9L549.1 278.1L549.5 275.5L549.9 276.9L550.0 278.4L550.5 277.7L551.0 277.4L551.5 276.3L552.0 276.6L552.5 277.5L553.0 275.8L553.5 275.9L554.0 274.3L554.5 270.7L554.6 268.9L555.0 261.8L555.4 267.8L555.5 271.1L556.0 272.6L556.5 274.2L557.0 275.9L557.5 278.4L557.9 278.1L558.0 277.5L558.2 275.5L558.5 277.2L558.6 278.2L559.0 278.8L559.5 279.9L560.0 279.5L560.5 279.1L561.0 279.6L561.5 278.5L561.6 277.7L562.0 274.2L562.4 276.9L562.5 277.8L563.0 278.4L563.5 278.1L564.0 278.6L564.5 279.5L565.0 279.3L565.5 277.8L566.0 277.8L566.1 276.0L566.5 272.5L566.9 275.5L567.0 275.9L567.5 278.7L568.0 278.7L568.5 280.0L569.0 280.2L569.5 280.3L570.0 280.3L570.4 279.3L570.5 278.6L570.8 278.0L571.0 279.7L571.1 279.6L571.5 279.9L572.0 280.5L572.5 278.1L573.0 279.3L573.5 278.3L574.0 277.0L574.5 278.1L575.0 278.3L575.5 276.2L576.0 276.4L576.5 273.4L577.0 270.8L577.4 266.6L577.5 265.0L577.8 258.0L578.0 266.0L578.1 263.5L578.5 268.8L579.0 271.5L579.5 275.6L580.0 275.6L580.4 276.9L580.5 277.0L580.8 275.5L581.0 277.6L581.1 277.9L581.5 278.3L582.0 278.9L582.5 280.2L583.0 279.8L583.5 279.3L584.0 277.2L584.1 275.5L584.5 273.0L584.9 276.4L585.0 276.6L585.5 278.2L586.0 279.1L586.5 279.5L587.0 279.9L587.5 280.3L587.9 280.0L588.0 280.3L588.2 279.2L588.5 280.2L588.6 280.1L589.0 280.8L589.5 280.3L590.0 280.7L590.5 280.4L591.0 279.7L591.5 279.6L592.0 280.0L592.5 279.6L592.9 278.2L593.0 276.9L593.2 275.0L593.5 277.6L593.6 277.3L594.0 277.9L594.5 279.5L595.0 280.0L595.5 280.5L596.0 280.0L596.5 279.9L596.6 279.2L597.0 278.0L597.4 279.9L597.5 279.4L598.0 279.3L598.5 279.9L599.0 279.9L599.5 278.4L600.0 277.7L600.4 275.1L600.5 272.8L600.8 270.5L601.0 272.9L601.1 273.0L601.5 275.7L602.0 276.9L602.5 278.5L603.0 279.0L603.5 279.8L604.0 279.6L604.1 279.8L604.5 278.0L604.9 279.0L605.0 280.0L605.5 279.4L606.0 278.1L606.5 277.0L607.0 276.0L607.5 275.9L608.0 275.4L608.5 277.9L609.0 276.8L609.5 273.0L610.0 275.0L610.5 271.4L611.0 273.4L611.5 269.5L612.0 268.5L612.5 266.2L613.0 256.9L613.1 253.6L613.5 244.2L613.9 255.6L614.0 255.8L614.5 268.2L615.0 267.9L615.5 272.2L616.0 266.6L616.1 263.8L616.5 258.0L616.9 262.5L617.0 266.5L617.5 269.8L618.0 267.8L618.1 262.4L618.5 255.5L618.9 262.0L619.0 266.7L619.5 268.5L620.0 272.7L620.5 274.2L621.0 275.7L621.1 276.4L621.5 273.0L621.9 274.7L622.0 277.1L622.5 277.7L623.0 278.4L623.5 277.6L624.0 276.1L624.1 274.9L624.5 270.5L624.9 275.0L625.0 276.1L625.5 275.9L626.0 275.9L626.5 276.7L627.0 278.5L627.5 276.7L628.0 277.7L628.5 276.4L629.0 276.6L629.5 274.6L629.9 271.5L630.0 270.9L630.2 265.0L630.5 267.7L630.6 269.6L631.0 272.6L631.5 274.4L632.0 276.4L632.5 276.8L633.0 278.0L633.5 278.4L633.6 277.2L634.0 274.2L634.4 276.6L634.5 276.8L635.0 278.5L635.5 278.6L636.0 279.2L636.5 279.2L637.0 278.9L637.4 277.4L637.5 277.6L637.8 275.0L638.0 277.1L638.1 276.6L638.5 278.4L639.0 279.7L639.5 279.9L640.0 280.1L640.5 279.9L641.0 278.7L641.5 278.6L642.0 278.7L642.5 279.5L643.0 278.7L643.5 277.5L643.6 277.2L644.0 273.5L644.4 275.1L644.5 277.7L645.0 278.1L645.5 279.7L646.0 279.3L646.5 280.2L647.0 280.5L647.5 279.6L648.0 279.9L648.5 279.7L648.6 280.1L649.0 278.0L649.4 279.8L649.5 279.9L650.0 280.1L650.5 281.0L651.0 280.2L651.5 279.9L652.0 280.0L652.5 280.3L653.0 280.8L653.5 279.9L654.0 280.1L654.5 279.6L654.9 278.8L655.0 277.6L655.2 276.0L655.5 278.4L655.6 278.7L656.0 278.6L656.5 279.9L657.0 280.4L657.5 280.6L658.0 280.0L658.5 280.2L659.0 280.4L659.5 279.7L659.9 278.5L660.0 278.9L660.2 276.8L660.5 278.6L660.6 278.0L661.0 279.8L661.5 280.0L662.0 279.4L662.5 279.3L663.0 279.5L663.5 279.2L663.6 277.1L664.0 275.5L664.4 278.3L664.5 277.5L665.0 276.9L665.5 276.7L666.0 278.2L666.5 275.7L667.0 273.7L667.5 270.0L668.0 264.6L668.1 265.7L668.5 253.0L668.9 259.2L669.0 265.0L669.5 267.5L670.0 262.5L670.5 259.0L670.6 250.8L671.0 235.0L671.4 246.4L671.5 249.2L672.0 259.4L672.5 263.3L673.0 269.3L673.5 272.3L673.6 273.7L674.0 270.5L674.4 273.1L674.5 275.6L675.0 277.4L675.5 276.5L676.0 276.1L676.5 278.7L677.0 276.8L677.5 275.4L678.0 276.5L678.5 277.4L679.0 274.9L679.5 276.0L679.9 273.9L680.0 268.9L680.2 266.8L680.5 269.4L680.6 273.1L681.0 267.9L681.5 266.7L682.0 261.4L682.5 259.2L683.0 246.4L683.1 226.7L683.5 210.5L683.9 235.5L684.0 238.4L684.5 244.5L685.0 261.2L685.5 259.4L686.0 267.2L686.1 264.5L686.5 265.5L686.9 272.0L687.0 271.6L687.5 274.0L688.0 273.5L688.5 276.1L689.0 276.2L689.5 276.9L689.9 273.7L690.0 272.9L690.2 270.5L690.5 272.9L690.6 275.5L691.0 276.8L691.5 276.0L692.0 277.1L692.5 275.4L693.0 272.8L693.5 265.7L693.6 266.0L694.0 253.0L694.4 259.1L694.5 263.9L695.0 260.2L695.5 255.4L695.6 245.5L696.0 231.0L696.4 248.2L696.5 250.5L697.0 257.7L697.5 264.4L698.0 269.3L698.5 269.9L698.6 269.4L699.0 265.5L699.4 271.8L699.5 273.5L700.0 274.9L700.5 276.0L701.0 277.3L701.5 275.8L701.6 275.9L702.0 272.5L702.4 274.7L702.5 276.4L703.0 278.3L703.5 278.8L704.0 278.7L704.5 279.2L704.9 277.8L705.0 277.9L705.2 275.5L705.5 277.0L705.6 278.1L706.0 278.9L706.5 278.8L707.0 278.4L707.5 278.3L708.0 279.7L708.5 278.1L709.0 276.7L709.1 275.5L709.5 272.5L709.9 274.7L710.0 277.0L710.5 277.9L711.0 279.3L711.5 278.8L712.0 279.1L712.5 278.8L713.0 279.3L713.5 278.3L713.6 277.4L714.0 275.5L714.4 276.8L714.5 277.8L715.0 279.0L715.5 280.3L716.0 280.3L716.5 279.9L717.0 279.8L717.4 278.8L717.5 279.0L717.8 276.8L718.0 277.6L718.1 278.2L718.5 279.2L719.0 278.2L719.5 276.2L719.9 276.0L720.0 274.4L720.2 270.5L720.5 274.2L720.6 272.6L721.0 272.4L721.5 271.3L722.0 265.9L722.4 261.9L722.5 259.3L722.8 245.5L723.0 255.9L723.1 252.5L723.5 265.4L724.0 266.5L724.5 269.5L725.0 272.0L725.5 270.9L725.6 269.7L726.0 264.2L726.4 269.1L726.5 271.4L727.0 275.3L727.5 276.0L728.0 275.3L728.5 276.7L729.0 278.6L729.5 277.0L729.9 274.6L730.0 274.0L730.2 271.8L730.5 275.3L730.6 275.1L731.0 276.8L731.5 277.8L732.0 279.2L732.5 277.0L733.0 275.0L733.1 272.2L733.5 268.0L733.9 271.9L734.0 273.0L734.5 274.8L735.0 277.4L735.5 277.2L736.0 279.3L736.5 277.1L737.0 278.0L737.4 277.4L737.5 275.8L737.8 273.5L738.0 276.1L738.1 275.1L738.5 277.4L739.0 279.0L739.5 279.9L740.0 280.1L740.5 280.1L741.0 280.8L741.1 280.4L741.5 279.2L741.9 280.0L742.0 280.0L742.5 280.2L743.0 279.9L743.5 280.1L744.0 280.7L744.5 281.0L744.9 280.7L745.0 280.2L745.2 280.0L745.5 279.5L745.6 279.6L746.0 278.8L746.5 278.5L747.0 275.3L747.5 274.8L748.0 272.6L748.5 270.0L749.0 263.7L749.1 258.2L749.5 249.2L749.9 260.6L750.0 263.8L750.5 266.0L751.0 271.1L751.5 273.7L752.0 274.9L752.4 276.4L752.5 277.1L752.8 274.2L753.0 275.3L753.1 277.0L753.5 277.9L754.0 279.5L754.5 279.2L755.0 279.4L755.5 280.2L756.0 278.9L756.1 278.0L756.5 276.8L756.9 278.8L757.0 279.4L757.5 279.8L758.0 280.1L758.5 280.1L759.0 280.3L759.5 281.2L760.0 279.9L760.5 279.9L761.0 280.4L761.5 280.4L762.0 280.7L762.4 280.4L762.5 280.2L762.8 279.2L763.0 280.0L763.1 279.9L763.5 280.2L764.0 280.0L764.5 279.9L765.0 281.2L765.5 281.1L766.0 279.8L766.5 280.9L767.0 280.7L767.5 281.1L768.0 281.0L768.5 281.0L769.0 279.8L769.5 280.6L770.0 280.9L770.1 280.2L770.5 279.2L770.9 280.3L771.0 280.0L771.5 280.0L772.0 280.4L772.5 280.5L773.0 280.0L773.5 279.0L774.0 278.9L774.5 278.8L775.0 276.2L775.1 277.0L775.5 273.0L775.9 275.9L776.0 274.8L776.5 272.3L777.0 271.4L777.5 264.2L778.0 258.6L778.1 253.4L778.5 239.2L778.9 257.4L779.0 252.5L779.5 265.9L780.0 265.9L780.5 270.0L781.0 271.0L781.4 273.2L781.5 275.0L781.8 270.5L782.0 274.8L782.1 273.5L782.5 277.0L783.0 277.1L783.5 277.8L784.0 279.4L784.5 278.5L785.0 278.3L785.1 276.6L785.5 274.2L785.9 276.1L786.0 276.7L786.5 278.7L787.0 279.2L787.5 280.2L788.0 279.5L788.5 279.9L788.9 278.8L789.0 277.9L789.2 276.8L789.5 278.4L789.6 277.9L790.0 279.1L790.5 280.3L791.0 280.0L791.5 279.9L792.0 280.2L792.5 280.4L792.6 280.1L793.0 279.2L793.4 280.6L793.5 280.2L794.0 280.3L794.5 280.2L795.0 280.3L795.5 279.7L796.0 280.3L796.5 279.5L797.0 279.0L797.5 277.8L797.6 277.8L798.0 274.2L798.4 277.5L798.5 277.2L799.0 277.3L799.5 274.6L800.0 273.1L800.5 269.6L800.9 265.5L801.0 263.3L801.2 253.0L801.5 257.7L801.6 263.9L802.0 264.3L802.5 270.6L803.0 273.3L803.5 274.5L803.9 275.5L804.0 273.4L804.2 271.8L804.5 275.4L804.6 275.6L805.0 276.3L805.5 277.6L806.0 278.6L806.5 279.3L807.0 280.5L807.5 280.3L807.6 279.5L808.0 278.0L808.4 279.3L808.5 279.5L809.0 279.3L809.5 279.3L810.0 276.2L810.5 274.1L811.0 270.7L811.5 272.2L812.0 267.8L812.5 261.9L812.6 255.9L813.0 247.5L813.4 255.0L813.5 262.5L814.0 265.8L814.5 269.2L815.0 269.8L815.5 267.6L815.6 262.7L816.0 254.2L816.4 265.1L816.5 265.8L817.0 271.3L817.5 272.2L818.0 274.5L818.5 276.2L818.9 277.2L819.0 274.9L819.2 273.0L819.5 275.6L819.6 276.5L820.0 277.6L820.5 278.6L821.0 278.6L821.5 278.1L822.0 275.9L822.5 275.2L822.6 271.5L823.0 268.0L823.4 271.1L823.5 273.1L824.0 275.7L824.5 271.2L825.0 269.4L825.5 262.9L826.0 260.6L826.4 252.8L826.5 246.2L826.8 230.0L827.0 243.4L827.1 245.1L827.5 258.8L828.0 263.8L828.5 264.0L829.0 267.5L829.4 264.7L829.5 261.3L829.8 255.5L830.0 264.8L830.1 263.0L830.5 267.3L831.0 272.1L831.5 275.5L832.0 274.7L832.5 276.1L832.6 276.5L833.0 273.0L833.4 274.7L833.5 276.0L834.0 277.5L834.5 278.7L835.0 277.8L835.5 276.4L836.0 274.7L836.4 270.8L836.5 269.0L836.8 264.2L837.0 269.8L837.1 270.3L837.5 272.2L838.0 274.6L838.5 277.1L839.0 276.4L839.5 276.3L839.6 274.1L840.0 270.5L840.4 273.6L840.5 272.3L841.0 272.9L841.5 266.4L842.0 264.7L842.5 254.3L843.0 238.0L843.1 240.3L843.5 214.2L843.9 228.5L844.0 233.8L844.5 248.3L845.0 254.7L845.5 262.4L846.0 267.3L846.4 269.6L846.5 268.7L846.8 265.5L847.0 270.5L847.1 268.8L847.5 273.3L848.0 275.4L848.5 276.1L849.0 277.5L849.5 277.2L850.0 278.9L850.1 278.6L850.5 276.8L850.9 278.1L851.0 279.5L851.5 279.2L852.0 279.7L852.5 279.8L853.0 277.5L853.5 279.4L854.0 279.6L854.5 277.9L855.0 276.6L855.5 275.2L855.6 273.4L856.0 268.0L856.4 271.9L856.5 274.8L857.0 276.8L857.5 277.7L858.0 278.7L858.5 279.4L858.9 277.6L859.0 277.6L859.2 275.5L859.5 276.7L859.6 276.8L860.0 278.8L860.5 279.6L861.0 279.6L861.5 280.5L862.0 279.8L862.5 278.5L862.6 278.2L863.0 275.5L863.4 278.1L863.5 278.1L864.0 278.8L864.5 279.9L865.0 278.8L865.5 280.0L866.0 278.9L866.5 278.7L867.0 279.0L867.5 277.2L867.6 277.4L868.0 274.2L868.4 277.5L868.5 277.8L869.0 277.6L869.5 279.3L870.0 277.8L870.5 276.9L871.0 276.8L871.5 277.9L872.0 277.1L872.5 274.9L872.6 273.8L873.0 268.0L873.4 272.8L873.5 275.0L874.0 275.0L874.5 276.9L875.0 277.9L875.5 278.3L876.0 279.4L876.5 277.8L877.0 278.6L877.5 278.0L877.6 277.2L878.0 274.2L878.4 276.5L878.5 276.9L879.0 276.3L879.5 274.9L880.0 276.9L880.5 275.0L881.0 271.0L881.5 270.0L882.0 261.4L882.1 257.9L882.5 245.5L882.9 254.0L883.0 261.7L883.5 264.2L884.0 268.7L884.5 273.0L885.0 274.6L885.1 273.6L885.5 266.8L885.9 272.5L886.0 273.6L886.5 275.7L887.0 277.7L887.5 278.4L888.0 277.4L888.5 278.6L888.9 277.2L889.0 278.2L889.2 275.5L889.5 276.5L889.6 277.8L890.0 278.6L890.5 279.7L891.0 280.0L891.5 279.9L892.0 279.6L892.5 279.1L892.6 278.5L893.0 278.0L893.4 278.2L893.5 276.7L894.0 274.8L894.5 273.6L895.0 270.8L895.5 260.6L895.9 256.8L896.0 252.6L896.2 241.8L896.5 252.7L896.6 249.1L897.0 258.4L897.5 267.5L898.0 269.8L898.5 272.3L898.9 274.8L899.0 272.6L899.2 271.8L899.5 274.5L899.6 274.7L900.0 275.8L900.5 277.2L901.0 278.1L901.5 278.9L902.0 278.2L902.5 275.9L902.6 274.5L903.0 269.2L903.4 271.7L903.5 273.2L904.0 276.1L904.5 278.0L905.0 278.5L905.5 276.8L905.6 276.5L906.0 271.8L906.4 275.0L906.5 276.0L907.0 276.8L907.5 278.1L908.0 279.4L908.5 279.9L908.9 280.6L909.0 280.4L909.2 279.2L909.5 279.9L909.6 280.1L910.0 280.3L910.5 280.3L911.0 280.0L911.5 279.9L912.0 278.3L912.5 276.1L912.6 276.8L913.0 273.0L913.4 276.4L913.5 277.0L914.0 277.7L914.5 279.6L915.0 279.7L915.5 278.9L916.0 279.9L916.5 280.1L917.0 279.8L917.5 279.1L917.6 278.7L918.0 275.5L918.4 277.2L918.5 278.6L919.0 279.1L919.5 279.4L920.0 279.6L920.5 279.7L921.0 279.8L921.4 279.1L921.5 277.9L921.8 276.8L922.0 278.4L922.1 279.1L922.5 278.8L923.0 277.4L923.5 276.5L924.0 276.1L924.5 274.9L925.0 271.6L925.1 268.8L925.5 260.5L925.9 268.9L926.0 270.9L926.5 272.6L927.0 274.9L927.5 276.1L928.0 277.5L928.5 278.4L928.9 277.0L929.0 278.3L929.2 275.5L929.5 276.3L929.6 277.5L930.0 279.2L930.5 279.7L931.0 280.2L931.5 280.6L932.0 279.8L932.5 280.0L932.6 279.9L933.0 279.2L933.4 280.2L933.5 279.8L934.0 277.6L934.5 277.2L935.0 276.4L935.5 272.3L936.0 272.7L936.5 269.0L937.0 267.9L937.5 259.0L937.6 255.3L938.0 245.5L938.4 255.6L938.5 255.6L939.0 266.9L939.5 262.7L940.0 255.2L940.1 257.0L940.5 236.0L940.9 251.1L941.0 258.0L941.5 264.1L942.0 265.5L942.5 269.3L942.6 268.7L943.0 268.0L943.4 271.0L943.5 272.6L944.0 274.3L944.5 275.1L945.0 276.1L945.5 277.8L946.0 278.3L946.5 277.6L947.0 276.1L947.5 272.6L947.6 272.9L948.0 266.8L948.4 272.1L948.5 274.2L949.0 274.9L949.5 276.4L950.0 278.2L950.5 277.6L951.0 278.3L951.4 277.8L951.5 276.9L951.8 274.2L952.0 275.9L952.1 275.8L952.5 278.1L953.0 279.5L953.5 279.7L954.0 279.8L954.5 279.0L955.0 279.1L955.1 277.2L955.5 275.5L955.9 277.7L956.0 277.5L956.5 279.6L957.0 279.7L957.5 280.1L958.0 280.4L958.5 280.1L958.9 280.2L959.0 280.3L959.2 279.2L959.5 278.7L959.6 279.2L960.0 278.4L960.5 276.4L961.0 276.0L961.5 273.0L962.0 271.7L962.5 265.1L963.0 260.3L963.1 255.4L963.5 239.2L963.9 251.7L964.0 259.7L964.5 263.6L965.0 268.3L965.5 269.5L965.6 269.6L966.0 263.0L966.4 270.2L966.5 271.7L967.0 273.8L967.5 276.0L968.0 276.8L968.5 278.2L968.5 286.7L968.0 288.5L967.5 289.3L967.0 291.3L966.5 295.8L966.4 298.6L966.0 303.0L965.6 296.5L965.5 295.4L965.0 295.9L964.5 299.4L964.0 305.7L963.9 306.3L963.5 319.2L963.1 306.8L963.0 301.1L962.5 298.3L962.0 292.8L961.5 291.3L961.0 288.7L960.5 287.8L960.0 286.2L959.6 286.1L959.5 285.9L959.2 286.0L959.0 285.2L958.9 284.9L958.5 284.6L958.0 284.6L957.5 284.8L957.0 285.2L956.5 285.2L956.0 286.5L955.9 286.9L955.5 289.2L955.1 287.5L955.0 285.9L954.5 285.9L954.0 285.4L953.5 285.5L953.0 286.1L952.5 286.4L952.1 287.9L952.0 289.2L951.8 290.5L951.5 289.1L951.4 288.3L951.0 287.2L950.5 285.6L950.0 287.9L949.5 288.0L949.0 288.7L948.5 289.4L948.4 293.0L948.0 295.5L947.6 291.7L947.5 289.4L947.0 288.9L946.5 286.7L946.0 286.3L945.5 287.6L945.0 288.3L944.5 288.7L944.0 290.6L943.5 290.3L943.4 290.9L943.0 295.5L942.6 293.2L942.5 295.6L942.0 300.0L941.5 307.6L941.0 307.2L940.9 314.5L940.5 329.2L940.1 318.5L940.0 307.9L939.5 299.2L939.0 302.2L938.5 301.8L938.4 309.9L938.0 318.0L937.6 305.6L937.5 305.0L937.0 298.0L936.5 292.3L936.0 293.0L935.5 291.4L935.0 286.8L934.5 288.4L934.0 286.2L933.5 285.1L933.4 285.2L933.0 286.0L932.6 284.7L932.5 284.7L932.0 284.5L931.5 284.5L931.0 285.2L930.5 285.6L930.0 286.6L929.6 287.5L929.5 286.8L929.2 289.2L929.0 287.2L928.9 287.0L928.5 286.9L928.0 286.5L927.5 288.6L927.0 289.2L926.5 290.8L926.0 293.1L925.9 297.9L925.5 301.8L925.1 295.3L925.0 294.9L924.5 288.9L924.0 287.6L923.5 288.5L923.0 286.0L922.5 286.6L922.1 286.3L922.0 286.8L921.8 288.0L921.5 286.4L921.4 285.7L921.0 285.0L920.5 284.8L920.0 284.3L919.5 285.1L919.0 285.3L918.5 285.8L918.4 287.0L918.0 288.5L917.6 285.8L917.5 286.2L917.0 285.7L916.5 285.9L916.0 285.8L915.5 285.8L915.0 286.7L914.5 287.5L914.0 288.5L913.5 291.9L913.4 292.0L913.0 295.5L912.6 290.5L912.5 290.3L912.0 288.2L911.5 286.1L911.0 285.5L910.5 285.0L910.0 285.3L909.6 285.0L909.5 285.6L909.2 286.0L909.0 284.9L908.9 284.8L908.5 285.2L908.0 285.5L907.5 285.5L907.0 286.6L906.5 288.4L906.4 288.2L906.0 291.8L905.6 287.7L905.5 286.9L905.0 288.2L904.5 288.1L904.0 291.4L903.5 294.5L903.4 297.1L903.0 300.5L902.6 293.0L902.5 291.4L902.0 289.5L901.5 286.9L901.0 287.9L900.5 287.7L900.0 288.9L899.6 290.8L899.5 289.2L899.2 293.0L899.0 291.5L898.9 290.4L898.5 291.0L898.0 295.2L897.5 298.2L897.0 305.5L896.6 306.6L896.5 309.6L896.2 320.5L896.0 313.2L895.9 309.1L895.5 300.6L895.0 296.7L894.5 292.0L894.0 290.0L893.5 287.1L893.4 287.8L893.0 286.8L892.6 286.5L892.5 285.9L892.0 285.3L891.5 284.7L891.0 284.5L890.5 284.7L890.0 285.3L889.6 285.9L889.5 286.0L889.2 288.0L889.0 286.1L888.9 285.8L888.5 285.7L888.0 287.1L887.5 287.0L887.0 288.4L886.5 289.0L886.0 292.7L885.9 292.9L885.5 299.2L885.1 294.5L885.0 291.5L884.5 291.2L884.0 295.2L883.5 296.6L883.0 302.0L882.9 303.0L882.5 315.0L882.1 306.1L882.0 299.3L881.5 293.5L881.0 292.6L880.5 289.4L880.0 288.6L879.5 288.5L879.0 288.6L878.5 287.8L878.4 288.4L878.0 290.5L877.6 288.6L877.5 287.4L877.0 286.1L876.5 286.9L876.0 285.3L875.5 285.8L875.0 287.0L874.5 286.5L874.0 288.8L873.5 289.2L873.4 289.4L873.0 294.2L872.6 291.5L872.5 289.3L872.0 287.7L871.5 287.6L871.0 286.8L870.5 286.9L870.0 286.4L869.5 285.6L869.0 286.2L868.5 287.5L868.4 288.1L868.0 290.5L867.6 288.6L867.5 287.0L867.0 285.7L866.5 285.6L866.0 284.8L865.5 285.7L865.0 285.0L864.5 285.0L864.0 286.1L863.5 286.6L863.4 286.6L863.0 289.2L862.6 286.5L862.5 286.9L862.0 285.2L861.5 285.3L861.0 285.0L860.5 285.4L860.0 285.7L859.6 286.8L859.5 286.9L859.2 289.2L859.0 287.7L858.9 286.5L858.5 285.5L858.0 286.9L857.5 286.6L857.0 288.8L856.5 291.5L856.4 290.6L856.0 295.5L855.6 291.9L855.5 288.9L855.0 288.1L854.5 288.0L854.0 286.3L853.5 285.9L853.0 285.8L852.5 285.3L852.0 285.0L851.5 285.7L851.0 285.7L850.9 285.9L850.5 288.0L850.1 286.8L850.0 286.6L849.5 287.6L849.0 288.0L848.5 287.9L848.0 288.5L847.5 291.5L847.1 292.6L847.0 294.9L846.8 298.0L846.5 293.8L846.4 293.6L846.0 298.5L845.5 298.1L845.0 308.6L844.5 309.3L844.0 325.3L843.9 322.8L843.5 346.0L843.1 318.3L843.0 320.3L842.5 302.6L842.0 301.5L841.5 297.3L841.0 293.6L840.5 291.3L840.4 290.4L840.0 293.0L839.6 290.5L839.5 289.4L839.0 290.1L838.5 291.8L838.0 292.7L837.5 298.4L837.1 299.0L837.0 305.2L836.8 308.0L836.5 299.4L836.4 301.7L836.0 294.3L835.5 290.9L835.0 288.2L834.5 290.4L834.0 286.8L833.5 289.6L833.4 289.8L833.0 293.0L832.6 288.9L832.5 289.6L832.0 290.6L831.5 293.6L831.0 297.4L830.5 298.3L830.1 303.8L830.0 308.9L829.8 318.0L829.5 306.1L829.4 303.9L829.0 301.9L828.5 298.0L828.0 304.8L827.5 306.1L827.1 312.0L827.0 321.7L826.8 330.5L826.5 313.2L826.4 313.0L826.0 302.1L825.5 297.8L825.0 293.6L824.5 295.7L824.0 292.8L823.5 291.4L823.4 291.2L823.0 296.8L822.6 292.0L822.5 291.2L822.0 287.7L821.5 287.0L821.0 287.1L820.5 286.7L820.0 288.7L819.6 291.8L819.5 291.0L819.2 294.2L819.0 291.8L818.9 289.7L818.5 290.1L818.0 292.8L817.5 293.5L817.0 295.9L816.5 304.6L816.4 303.8L816.0 314.2L815.6 303.7L815.5 301.7L815.0 293.3L814.5 293.9L814.0 295.1L813.5 300.1L813.4 302.2L813.0 313.0L812.6 302.7L812.5 297.6L812.0 293.2L811.5 293.9L811.0 291.3L810.5 288.0L810.0 286.8L809.5 288.1L809.0 285.3L808.5 285.7L808.4 285.6L808.0 286.8L807.6 285.1L807.5 284.9L807.0 285.4L806.5 285.0L806.0 285.5L805.5 286.3L805.0 287.0L804.6 288.7L804.5 289.7L804.2 291.8L804.0 290.5L803.9 288.3L803.5 288.0L803.0 288.8L802.5 290.3L802.0 292.8L801.6 298.0L801.5 295.4L801.2 301.8L801.0 298.5L800.9 297.0L800.5 290.6L800.0 288.2L799.5 287.3L799.0 288.8L798.5 289.3L798.4 288.9L798.0 293.0L797.6 290.3L797.5 289.4L797.0 286.8L796.5 285.4L796.0 284.9L795.5 284.7L795.0 285.1L794.5 284.7L794.0 285.1L793.5 285.1L793.4 285.2L793.0 286.0L792.6 284.7L792.5 285.3L792.0 284.4L791.5 285.3L791.0 285.1L790.5 284.4L790.0 285.1L789.6 286.9L789.5 287.4L789.2 288.0L789.0 287.0L788.9 285.9L788.5 285.2L788.0 284.7L787.5 285.4L787.0 285.3L786.5 285.8L786.0 287.2L785.9 286.9L785.5 289.2L785.1 287.3L785.0 286.7L784.5 285.4L784.0 286.4L783.5 287.3L783.0 287.1L782.5 288.7L782.1 289.3L782.0 291.9L781.8 293.0L781.5 290.0L781.4 292.5L781.0 291.5L780.5 296.3L780.0 300.0L779.5 305.2L779.0 307.0L778.9 311.6L778.5 325.5L778.1 307.8L778.0 309.2L777.5 300.4L777.0 296.0L776.5 292.9L776.0 289.0L775.9 289.7L775.5 290.5L775.1 287.4L775.0 286.7L774.5 286.4L774.0 285.2L773.5 285.2L773.0 284.9L772.5 285.2L772.0 285.3L771.5 284.2L771.0 284.9L770.9 284.8L770.5 285.5L770.1 285.2L770.0 284.5L769.5 285.0L769.0 284.9L768.5 284.7L768.0 284.0L767.5 284.9L767.0 284.6L766.5 284.0L766.0 284.4L765.5 285.1L765.0 285.2L764.5 284.2L764.0 284.1L763.5 284.6L763.1 285.0L763.0 285.2L762.8 286.0L762.5 285.4L762.4 284.7L762.0 284.2L761.5 284.5L761.0 284.2L760.5 285.1L760.0 284.5L759.5 285.0L759.0 284.9L758.5 284.7L758.0 284.8L757.5 285.2L757.0 285.7L756.9 285.6L756.5 287.5L756.1 285.6L756.0 285.6L755.5 285.2L755.0 285.4L754.5 285.5L754.0 286.4L753.5 285.9L753.1 286.9L753.0 287.5L752.8 289.2L752.5 288.6L752.4 289.0L752.0 290.4L751.5 292.0L751.0 294.1L750.5 294.3L750.0 300.4L749.9 301.4L749.5 311.8L749.1 301.1L749.0 299.8L748.5 294.3L748.0 290.0L747.5 289.2L747.0 287.7L746.5 287.0L746.0 285.8L745.6 285.1L745.5 284.6L745.2 285.3L745.0 284.7L744.9 284.3L744.5 284.4L744.0 284.3L743.5 285.0L743.0 284.7L742.5 284.7L742.0 285.2L741.9 284.4L741.5 285.5L741.1 284.3L741.0 284.8L740.5 284.3L740.0 284.3L739.5 285.0L739.0 285.4L738.5 285.5L738.1 287.8L738.0 287.3L737.8 289.2L737.5 288.0L737.4 287.5L737.0 285.6L736.5 285.3L736.0 287.2L735.5 287.3L735.0 287.5L734.5 288.8L734.0 291.7L733.9 290.5L733.5 295.5L733.1 290.2L733.0 289.3L732.5 287.4L732.0 286.5L731.5 286.5L731.0 286.7L730.6 289.5L730.5 288.6L730.2 291.8L730.0 289.9L729.9 288.8L729.5 287.8L729.0 286.5L728.5 288.1L728.0 288.6L727.5 289.0L727.0 290.9L726.5 293.7L726.4 294.9L726.0 300.5L725.6 294.6L725.5 294.7L725.0 292.7L724.5 291.9L724.0 295.5L723.5 296.8L723.1 305.0L723.0 303.5L722.8 313.0L722.5 304.0L722.4 302.0L722.0 297.7L721.5 292.0L721.0 290.6L720.6 289.2L720.5 291.6L720.2 293.0L720.0 291.4L719.9 290.7L719.5 287.0L719.0 286.3L718.5 285.4L718.1 285.4L718.0 285.3L717.8 286.8L717.5 285.9L717.4 285.5L717.0 285.3L716.5 284.4L716.0 284.8L715.5 285.4L715.0 285.0L714.5 286.1L714.4 286.2L714.0 288.0L713.6 286.5L713.5 286.2L713.0 285.9L712.5 285.9L712.0 286.1L711.5 285.6L711.0 286.5L710.5 286.5L710.0 288.5L709.9 289.9L709.5 293.0L709.1 288.9L709.0 288.3L708.5 286.1L708.0 285.7L707.5 285.7L707.0 286.3L706.5 284.7L706.0 285.2L705.6 286.3L705.5 286.7L705.2 288.0L705.0 286.3L704.9 286.8L704.5 285.5L704.0 285.2L703.5 285.6L703.0 285.8L702.5 287.2L702.4 288.9L702.0 290.5L701.6 287.4L701.5 287.0L701.0 286.5L700.5 288.2L700.0 288.3L699.5 291.5L699.4 290.3L699.0 295.5L698.6 292.1L698.5 292.9L698.0 295.7L697.5 299.3L697.0 301.0L696.5 311.8L696.4 313.4L696.0 326.8L695.6 309.8L695.5 312.4L695.0 302.6L694.5 298.4L694.4 301.0L694.0 308.0L693.6 299.1L693.5 297.8L693.0 290.6L692.5 290.0L692.0 287.8L691.5 288.0L691.0 287.3L690.6 289.3L690.5 289.4L690.2 293.0L690.0 290.0L689.9 288.9L689.5 288.5L689.0 289.0L688.5 288.6L688.0 290.6L687.5 293.2L687.0 293.8L686.9 293.0L686.5 298.0L686.1 300.4L686.0 299.9L685.5 302.8L685.0 306.5L684.5 311.2L684.0 331.8L683.9 337.1L683.5 355.5L683.1 338.9L683.0 329.7L682.5 306.6L682.0 299.1L681.5 300.8L681.0 292.7L680.6 292.1L680.5 292.9L680.2 294.2L680.0 291.5L679.9 290.5L679.5 287.3L679.0 287.9L678.5 286.5L678.0 286.1L677.5 286.2L677.0 288.0L676.5 288.1L676.0 288.1L675.5 286.3L675.0 288.0L674.5 288.6L674.4 289.7L674.0 293.0L673.6 291.5L673.5 292.0L673.0 294.2L672.5 295.7L672.0 296.4L671.5 307.4L671.4 303.8L671.0 318.0L670.6 306.5L670.5 300.2L670.0 297.2L669.5 293.2L669.0 298.9L668.9 302.9L668.5 308.0L668.1 297.7L668.0 298.2L667.5 290.8L667.0 290.3L666.5 287.9L666.0 286.9L665.5 286.4L665.0 286.3L664.5 286.7L664.4 287.1L664.0 288.5L663.6 286.6L663.5 285.5L663.0 285.2L662.5 284.9L662.0 284.6L661.5 284.9L661.0 285.4L660.6 286.2L660.5 286.4L660.2 288.0L660.0 286.7L659.9 286.7L659.5 285.2L659.0 284.4L658.5 284.7L658.0 285.3L657.5 285.4L657.0 285.3L656.5 284.9L656.0 285.9L655.6 287.2L655.5 286.7L655.2 288.5L655.0 286.4L654.9 286.6L654.5 285.1L654.0 284.6L653.5 285.1L653.0 285.1L652.5 284.8L652.0 284.6L651.5 284.1L651.0 285.3L650.5 285.2L650.0 284.8L649.5 285.5L649.4 285.5L649.0 286.8L648.6 285.6L648.5 285.0L648.0 284.3L647.5 285.4L647.0 285.3L646.5 285.0L646.0 284.9L645.5 285.3L645.0 285.7L644.5 287.0L644.4 287.4L644.0 289.2L643.6 286.6L643.5 286.8L643.0 284.9L642.5 285.7L642.0 285.2L641.5 285.0L641.0 285.7L640.5 285.1L640.0 285.7L639.5 284.9L639.0 285.4L638.5 286.0L638.1 286.6L638.0 287.1L637.8 288.5L637.5 287.3L637.4 286.9L637.0 285.2L636.5 284.7L636.0 285.4L635.5 285.1L635.0 285.7L634.5 286.7L634.4 287.2L634.0 289.2L633.6 287.2L633.5 286.0L633.0 286.6L632.5 286.2L632.0 288.4L631.5 288.7L631.0 292.0L630.6 292.4L630.5 293.4L630.2 298.0L630.0 295.8L629.9 292.4L629.5 288.9L629.0 289.8L628.5 289.4L628.0 289.0L627.5 287.8L627.0 285.7L626.5 287.9L626.0 288.0L625.5 286.9L625.0 288.7L624.9 288.3L624.5 291.8L624.1 289.5L624.0 287.2L623.5 286.0L623.0 285.6L622.5 286.5L622.0 288.0L621.9 288.6L621.5 290.5L621.1 287.5L621.0 287.9L620.5 288.9L620.0 291.7L619.5 293.0L619.0 297.1L618.9 299.3L618.5 305.5L618.1 299.5L618.0 297.2L617.5 293.3L617.0 296.2L616.9 301.4L616.5 308.0L616.1 301.9L616.0 294.8L615.5 295.5L615.0 296.5L614.5 300.1L614.0 307.0L613.9 310.6L613.5 323.0L613.1 308.8L613.0 309.7L612.5 300.0L612.0 298.3L611.5 295.1L611.0 295.4L610.5 290.5L610.0 295.0L609.5 292.2L609.0 293.9L608.5 289.0L608.0 290.5L607.5 288.2L607.0 290.0L606.5 286.7L606.0 286.0L605.5 286.5L605.0 285.3L604.9 285.4L604.5 286.8L604.1 285.6L604.0 285.2L603.5 285.4L603.0 286.4L602.5 286.3L602.0 287.7L601.5 288.6L601.1 291.3L601.0 291.2L600.8 295.5L600.5 293.7L600.4 292.3L600.0 288.0L599.5 286.8L599.0 286.0L598.5 285.3L598.0 285.5L597.5 285.4L597.4 285.1L597.0 286.8L596.6 285.0L596.5 285.3L596.0 284.4L595.5 285.0L595.0 284.7L594.5 285.0L594.0 286.2L593.6 286.3L593.5 286.9L593.2 288.5L593.0 287.3L592.9 286.5L592.5 285.5L592.0 284.5L591.5 285.0L591.0 283.9L590.5 284.5L590.0 284.6L589.5 285.3L589.0 285.2L588.6 285.0L588.5 285.4L588.2 286.0L588.0 284.9L587.9 285.0L587.5 285.3L587.0 285.2L586.5 284.8L586.0 284.8L585.5 285.7L585.0 286.9L584.9 286.9L584.5 289.2L584.1 286.9L584.0 286.4L583.5 285.5L583.0 285.4L582.5 285.5L582.0 285.1L581.5 285.6L581.1 285.9L581.0 287.1L580.8 288.0L580.5 286.8L580.4 287.9L580.0 287.2L579.5 288.3L579.0 291.5L578.5 291.9L578.1 296.4L578.0 295.7L577.8 303.0L577.5 298.0L577.4 296.2L577.0 291.5L576.5 288.5L576.0 290.3L575.5 288.2L575.0 289.3L574.5 287.2L574.0 285.6L573.5 285.8L573.0 286.1L572.5 285.8L572.0 285.6L571.5 285.6L571.1 285.5L571.0 285.4L570.8 286.8L570.5 286.1L570.4 285.7L570.0 285.4L569.5 285.3L569.0 285.0L568.5 285.2L568.0 285.8L567.5 286.1L567.0 288.1L566.9 288.4L566.5 290.5L566.1 288.3L566.0 287.3L565.5 286.3L565.0 285.5L564.5 286.3L564.0 284.9L563.5 286.2L563.0 286.0L562.5 287.0L562.4 287.0L562.0 289.2L561.6 286.9L561.5 286.3L561.0 285.2L560.5 284.2L560.0 285.2L559.5 285.2L559.0 285.9L558.6 286.3L558.5 286.9L558.2 288.0L558.0 287.2L557.9 285.9L557.5 286.1L557.0 287.3L556.5 288.0L556.0 289.0L555.5 292.3L555.4 295.0L555.0 298.0L554.6 293.8L554.5 292.9L554.0 289.3L553.5 286.8L553.0 286.7L552.5 285.5L552.0 285.0L551.5 286.1L551.0 284.6L550.5 284.9L550.0 286.1L549.9 286.5L549.5 288.0L549.1 286.3L549.0 285.4L548.5 285.1L548.0 284.9L547.5 285.5L547.0 285.4L546.5 284.9L546.0 285.1L545.5 285.9L545.0 286.9L544.9 287.7L544.5 289.2L544.1 287.0L544.0 286.8L543.5 289.0L543.0 289.3L542.5 292.5L542.0 293.7L541.9 296.9L541.5 301.8L541.1 295.7L541.0 292.4L540.5 289.2L540.0 287.7L539.5 288.0L539.0 287.7L538.5 286.5L538.0 285.7L537.5 285.4L537.4 285.4L537.0 286.8L536.6 284.9L536.5 285.1L536.0 284.3L535.5 284.5L535.0 284.6L534.5 284.7L534.0 285.3L533.6 286.8L533.5 286.9L533.2 288.0L533.0 286.7L532.9 286.7L532.5 286.9L532.0 287.5L531.5 289.5L531.0 290.1L530.5 292.5L530.4 292.9L530.0 300.5L529.6 293.4L529.5 292.5L529.0 291.3L528.5 291.1L528.0 293.7L527.5 295.5L527.4 299.6L527.0 304.2L526.6 298.7L526.5 296.8L526.0 292.4L525.5 292.9L525.0 294.5L524.9 297.4L524.5 303.0L524.1 296.8L524.0 294.3L523.5 295.4L523.0 300.8L522.5 302.6L522.0 312.9L521.9 318.6L521.5 327.5L521.1 311.7L521.0 311.0L520.5 300.8L520.0 296.2L519.5 299.8L519.4 300.4L519.0 308.0L518.6 297.0L518.5 298.1L518.0 292.5L517.5 299.3L517.0 301.5L516.6 307.7L516.5 312.8L516.2 318.0L516.0 307.7L515.9 310.2L515.5 298.7L515.0 298.8L514.5 297.7L514.0 296.6L513.6 297.3L513.5 303.7L513.2 308.0L513.0 304.0L512.9 301.8L512.5 292.9L512.0 292.2L511.5 290.5L511.0 286.9L510.5 286.1L510.0 287.9L509.9 288.4L509.5 291.8L509.1 288.2L509.0 287.4L508.5 286.4L508.0 285.6L507.5 285.7L507.0 286.1L506.5 287.4L506.1 288.5L506.0 289.2L505.8 290.5L505.5 287.7L505.4 287.4L505.0 286.4L504.5 285.4L504.0 285.2L503.5 286.3L503.0 286.2L502.5 288.1L502.4 287.9L502.0 290.5L501.6 288.5L501.5 289.3L501.0 290.8L500.5 294.4L500.0 294.8L499.5 303.0L499.4 303.6L499.0 311.0L498.6 304.1L498.5 296.0L498.0 293.6L497.5 289.4L497.0 292.8L496.5 291.2L496.0 288.3L495.5 288.1L495.0 289.6L494.5 288.2L494.0 288.1L493.5 286.4L493.0 285.7L492.5 285.2L492.4 284.9L492.0 286.0L491.6 285.2L491.5 284.7L491.0 285.0L490.5 284.8L490.0 285.3L489.5 285.3L489.0 284.1L488.6 285.4L488.5 285.3L488.2 284.5L488.0 284.6L487.9 284.9L487.5 285.1L487.0 284.8L486.5 284.2L486.0 284.6L485.5 284.0L485.0 284.8L484.9 284.6L484.5 285.5L484.1 285.2L484.0 285.2L483.5 284.8L483.0 285.1L482.5 285.4L482.0 285.8L481.5 285.9L481.0 286.9L480.5 287.3L480.0 288.2L479.9 289.9L479.5 293.0L479.1 289.1L479.0 287.5L478.5 289.3L478.0 292.0L477.5 292.1L477.0 296.6L476.9 301.5L476.5 305.5L476.1 298.9L476.0 297.0L475.5 296.3L475.0 299.4L474.5 304.1L474.0 305.9L473.6 309.2L473.5 318.1L473.2 328.0L473.0 316.7L472.9 317.1L472.5 300.5L472.0 296.8L471.5 296.6L471.0 292.1L470.5 291.3L470.0 292.1L469.9 295.8L469.5 300.5L469.1 295.9L469.0 294.6L468.5 290.1L468.0 287.4L467.5 287.6L467.0 288.8L466.9 290.6L466.5 293.0L466.1 289.7L466.0 288.5L465.5 286.9L465.0 285.5L464.5 285.8L464.0 284.7L463.5 285.4L463.0 284.6L462.5 284.9L462.4 284.7L462.0 285.5L461.6 284.2L461.5 284.9L461.0 284.7L460.5 284.5L460.0 284.2L459.5 285.2L459.0 284.7L458.5 284.9L458.0 284.7L457.5 285.6L457.4 285.5L457.0 286.8L456.6 285.0L456.5 285.4L456.0 284.5L455.5 285.0L455.0 284.5L454.5 284.5L454.0 285.3L453.5 285.1L453.0 284.8L452.5 285.2L452.0 284.5L451.5 284.8L451.1 286.1L451.0 286.5L450.8 287.5L450.5 286.5L450.4 285.5L450.0 285.1L449.5 284.7L449.0 285.0L448.5 285.2L448.0 285.6L447.5 285.0L447.0 285.9L446.5 287.2L446.1 287.5L446.0 289.3L445.8 290.5L445.5 287.4L445.4 288.3L445.0 286.9L444.5 285.4L444.0 285.4L443.5 285.1L443.0 285.3L442.5 284.4L442.0 285.1L441.5 284.7L441.0 284.5L440.5 284.6L440.0 284.6L439.9 285.3L439.5 286.0L439.1 285.1L439.0 284.8L438.5 285.2L438.0 284.8L437.5 284.9L437.0 285.4L436.5 285.8L436.1 287.7L436.0 288.0L435.8 289.2L435.5 287.0L435.4 287.0L435.0 287.5L434.5 289.1L434.0 289.9L433.5 291.3L433.0 294.8L432.5 298.4L432.4 301.5L432.0 308.0L431.6 302.0L431.5 295.5L431.0 294.5L430.5 294.7L430.0 294.9L429.5 291.3L429.0 294.4L428.6 298.9L428.5 300.3L428.2 308.0L428.0 304.0L427.9 302.0L427.5 293.6L427.0 299.8L426.5 300.8L426.0 303.8L425.5 314.1L425.0 324.6L424.9 328.3L424.5 347.5L424.1 328.0L424.0 317.4L423.5 311.8L423.0 304.6L422.5 298.9L422.0 295.2L421.5 297.9L421.0 296.8L420.5 303.3L420.4 302.7L420.0 313.0L419.6 303.0L419.5 298.2L419.0 301.9L418.5 297.4L418.0 304.1L417.5 308.1L417.0 315.0L416.9 326.7L416.5 339.2L416.1 316.2L416.0 309.5L415.5 304.5L415.4 304.6L415.0 305.5L414.6 297.3L414.5 296.1L414.0 295.0L413.5 295.0L413.0 300.4L412.9 302.7L412.5 308.0L412.1 300.2L412.0 298.1L411.5 297.4L411.0 304.9L410.5 311.6L410.0 322.9L409.6 325.4L409.5 333.7L409.2 349.2L409.0 335.4L408.9 319.2L408.5 309.6L408.0 305.4L407.5 299.1L407.0 301.4L406.6 306.0L406.5 303.3L406.2 313.0L406.0 308.1L405.9 305.3L405.5 303.5L405.0 303.2L404.5 308.9L404.1 329.0L404.0 336.3L403.8 343.0L403.5 324.0L403.4 317.9L403.0 310.4L402.5 301.7L402.0 300.8L401.5 295.5L401.0 291.9L400.5 292.5L400.4 295.7L400.0 300.5L399.6 294.6L399.5 291.9L399.0 292.4L398.5 290.6L398.0 291.7L397.5 291.2L397.0 296.3L396.6 297.3L396.5 301.0L396.2 308.0L396.0 303.7L395.9 300.8L395.5 293.1L395.0 293.0L394.5 293.2L394.0 294.3L393.5 297.9L393.0 304.6L392.9 305.0L392.5 315.5L392.1 305.2L392.0 303.3L391.5 297.0L391.0 295.4L390.5 288.7L390.0 291.6L389.5 289.9L389.0 291.6L388.5 289.5L388.0 290.0L387.9 292.7L387.5 295.5L387.1 291.8L387.0 289.2L386.5 287.7L386.0 288.2L385.5 290.6L385.0 292.1L384.5 294.0L384.1 297.7L384.0 295.5L383.8 303.0L383.5 297.9L383.4 297.8L383.0 292.0L382.5 296.7L382.0 297.4L381.5 304.6L381.0 307.0L380.5 310.4L380.4 324.2L380.0 336.0L379.6 317.9L379.5 314.0L379.0 305.6L378.5 300.2L378.0 298.8L377.5 294.4L377.0 294.8L376.5 295.3L376.0 290.2L375.5 294.9L375.0 293.8L374.9 293.9L374.5 300.5L374.1 295.7L374.0 292.4L373.5 289.7L373.0 292.0L372.5 292.7L372.0 292.6L371.5 292.4L371.0 296.3L370.5 299.5L370.4 300.8L370.0 313.0L369.6 301.3L369.5 301.2L369.0 297.6L368.5 300.5L368.0 302.5L367.5 307.3L367.0 319.8L366.6 323.5L366.5 333.0L366.2 343.0L366.0 333.1L365.9 316.3L365.5 310.8L365.0 302.0L364.5 299.2L364.0 300.0L363.5 304.2L363.0 304.0L362.5 292.7L362.0 294.4L361.5 293.8L361.0 295.8L360.5 298.8L360.4 302.3L360.0 308.0L359.6 299.8L359.5 295.9L359.0 299.9L358.5 301.8L358.0 314.6L357.5 328.1L357.4 329.0L357.0 346.2L356.6 330.3L356.5 324.9L356.0 309.4L355.5 299.4L355.0 295.7L354.5 298.6L354.0 290.9L353.5 288.8L353.0 287.7L352.9 287.4L352.5 288.0L352.1 286.1L352.0 286.2L351.5 286.1L351.0 286.1L350.5 287.2L350.0 288.5L349.5 289.1L349.1 291.3L349.0 292.5L348.8 295.5L348.5 291.0L348.4 291.1L348.0 291.3L347.5 294.5L347.0 296.1L346.5 300.0L346.0 301.3L345.5 308.7L345.0 315.2L344.9 317.4L344.5 335.5L344.1 320.3L344.0 317.8L343.5 304.5L343.0 303.1L342.5 293.3L342.0 294.0L341.5 290.8L341.0 296.1L340.5 290.2L340.0 291.7L339.9 291.8L339.5 298.0L339.1 291.6L339.0 290.3L338.5 289.2L338.0 286.8L337.5 288.0L337.0 285.9L336.5 287.1L336.0 287.1L335.5 290.1L335.4 289.9L335.0 293.0L334.6 289.9L334.5 288.0L334.0 290.3L333.5 290.2L333.0 292.5L332.5 296.9L332.0 297.3L331.5 305.9L331.0 311.0L330.9 314.9L330.5 328.0L330.1 316.2L330.0 308.8L329.5 299.9L329.0 295.6L328.5 296.9L328.0 290.6L327.5 288.4L327.0 287.5L326.6 287.4L326.5 288.0L326.2 290.5L326.0 287.4L325.9 288.6L325.5 288.1L325.0 289.5L324.5 290.8L324.0 290.4L323.5 294.6L323.0 300.0L322.9 302.8L322.5 308.0L322.1 297.1L322.0 299.0L321.5 297.7L321.0 300.9L320.5 304.4L320.0 308.2L319.6 318.8L319.5 332.9L319.2 339.8L319.0 331.9L318.9 324.4L318.5 305.4L318.0 305.9L317.5 298.1L317.0 295.1L316.5 292.0L316.0 298.9L315.5 293.8L315.0 291.8L314.5 290.7L314.1 294.9L314.0 296.3L313.8 298.0L313.5 293.0L313.4 292.8L313.0 290.5L312.5 287.5L312.0 288.3L311.5 291.6L311.0 293.2L310.5 296.3L310.4 294.7L310.0 303.0L309.6 295.8L309.5 296.6L309.0 300.2L308.5 307.9L308.0 312.9L307.5 321.1L307.4 330.9L307.0 348.0L306.6 324.4L306.5 315.3L306.0 308.2L305.5 299.6L305.0 305.8L304.5 299.3L304.1 304.4L304.0 303.9L303.8 315.5L303.5 302.7L303.4 307.9L303.0 296.6L302.5 295.1L302.0 291.4L301.5 289.8L301.0 287.1L300.5 286.5L300.4 286.7L300.0 288.0L299.6 286.2L299.5 286.2L299.0 285.3L298.5 285.9L298.0 286.2L297.5 288.5L297.4 289.4L297.0 291.8L296.6 288.0L296.5 288.3L296.0 286.6L295.5 286.2L295.0 287.9L294.5 289.9L294.1 293.1L294.0 293.6L293.8 295.5L293.5 290.6L293.4 292.2L293.0 291.9L292.5 295.2L292.0 295.4L291.5 299.1L291.0 305.9L290.9 309.0L290.5 324.2L290.1 308.5L290.0 305.1L289.5 295.7L289.0 293.1L288.5 292.3L288.0 291.8L287.5 288.2L287.0 286.6L286.6 288.4L286.5 288.6L286.2 290.5L286.0 287.7L285.9 288.5L285.5 287.3L285.0 288.8L284.5 289.7L284.0 292.4L283.5 293.4L283.0 298.9L282.9 302.0L282.5 308.0L282.1 298.9L282.0 297.3L281.5 294.1L281.0 288.5L280.5 287.5L280.4 286.7L280.0 286.8L279.6 286.3L279.5 286.3L279.0 284.7L278.5 285.2L278.0 285.5L277.5 286.1L277.0 287.1L276.6 287.2L276.5 289.7L276.2 290.5L276.0 289.3L275.9 288.1L275.5 286.0L275.0 285.5L274.5 285.7L274.0 284.6L273.5 285.0L273.0 285.1L272.5 284.2L272.0 284.4L271.6 285.1L271.5 285.2L271.2 285.5L271.0 284.8L270.9 284.5L270.5 284.2L270.0 284.8L269.5 284.4L269.0 284.4L268.5 284.9L268.0 285.4L267.9 285.7L267.5 286.8L267.1 285.4L267.0 284.9L266.5 284.8L266.0 285.0L265.5 284.5L265.0 285.0L264.5 285.3L264.0 285.7L263.5 285.8L263.0 287.2L262.9 287.6L262.5 290.5L262.1 288.0L262.0 287.0L261.5 289.6L261.0 291.5L260.5 291.9L260.0 293.0L259.5 299.2L259.1 303.5L259.0 306.5L258.8 313.0L258.5 305.4L258.4 304.0L258.0 297.6L257.5 293.9L257.0 295.3L256.5 296.4L256.1 301.7L256.0 299.2L255.8 308.0L255.5 299.6L255.4 296.5L255.0 296.0L254.5 299.2L254.0 297.4L253.5 301.5L253.0 316.1L252.8 319.5L252.5 328.0L252.2 313.7L252.0 306.9L251.5 302.3L251.0 295.5L250.5 294.3L250.0 298.9L249.5 291.0L249.0 295.1L248.5 291.1L248.0 292.9L247.8 296.1L247.5 300.5L247.2 295.2L247.0 291.3L246.5 292.5L246.0 298.1L245.5 297.1L245.0 300.9L244.5 316.9L244.3 316.9L244.0 329.8L243.7 309.2L243.5 308.0L243.0 298.3L242.5 297.9L242.0 297.3L241.6 302.7L241.5 304.8L241.2 308.0L241.0 300.9L240.9 298.6L240.5 295.4L240.0 296.2L239.5 295.1L239.0 300.6L238.5 304.8L238.0 313.0L237.8 308.6L237.5 326.8L237.2 308.1L237.0 304.3L236.5 299.8L236.0 296.1L235.5 298.7L235.0 291.9L234.5 290.6L234.0 292.7L233.5 290.9L233.0 290.7L232.8 292.7L232.5 295.5L232.2 291.8L232.0 289.5L231.5 290.9L231.0 290.9L230.5 294.0L230.0 293.6L229.5 299.6L229.1 307.7L229.0 303.2L228.8 314.2L228.5 302.7L228.4 300.8L228.0 295.5L227.5 294.3L227.0 292.5L226.5 288.8L226.0 288.1L225.5 289.9L225.3 292.4L225.0 295.5L224.7 290.0L224.5 290.1L224.0 289.9L223.5 292.6L223.0 292.7L222.5 295.3L222.0 299.7L221.6 306.3L221.5 304.1L221.2 313.0L221.0 303.0L220.9 301.6L220.5 302.2L220.0 302.8L219.5 302.5L219.0 313.2L218.5 326.4L218.3 323.6L218.0 346.0L217.7 320.3L217.5 318.2L217.0 307.3L216.5 301.0L216.0 302.8L215.5 299.4L215.0 297.3L214.5 299.5L214.0 303.0L213.5 300.0L213.0 295.0L212.5 293.4L212.0 294.4L211.6 298.9L211.5 300.4L211.2 308.0L211.0 300.0L210.9 297.2L210.5 295.0L210.0 293.6L209.5 293.6L209.0 294.4L208.5 300.3L208.0 298.6L207.5 303.4L207.0 307.2L206.6 317.6L206.5 318.9L206.2 330.5L206.0 313.3L205.9 319.9L205.5 307.7L205.0 307.1L204.5 316.5L204.1 319.5L204.0 319.8L203.8 340.5L203.5 317.7L203.4 322.3L203.0 311.7L202.5 304.5L202.0 297.4L201.5 297.1L201.0 294.0L200.5 294.8L200.0 292.0L199.5 289.6L199.1 290.5L199.0 289.7L198.8 293.0L198.5 289.3L198.4 289.6L198.0 289.9L197.5 291.8L197.0 294.0L196.5 293.1L196.0 295.0L195.5 301.7L195.0 308.2L194.6 312.6L194.5 323.5L194.2 329.8L194.0 317.2L193.9 316.5L193.5 304.9L193.0 297.4L192.5 302.7L192.0 297.8L191.5 292.6L191.0 299.9L190.5 292.5L190.0 291.8L189.5 292.4L189.0 292.8L188.5 288.6L188.0 293.2L187.5 291.5L187.0 286.6L186.5 289.3L186.0 286.8L185.5 287.4L185.3 288.6L185.0 290.5L184.7 288.3L184.5 287.9L184.0 288.3L183.5 291.6L183.0 289.9L182.5 292.9L182.0 295.6L181.5 298.5L181.0 298.8L180.5 303.7L180.3 315.9L180.0 323.0L179.7 308.0L179.5 303.7L179.0 300.3L178.5 294.2L178.0 290.4L177.5 292.2L177.0 289.6L176.5 289.4L176.0 288.4L175.5 287.3L175.3 287.7L175.0 290.5L174.7 288.6L174.5 287.1L174.0 289.5L173.5 290.0L173.0 291.1L172.5 293.7L172.1 296.4L172.0 297.7L171.8 305.5L171.5 297.0L171.4 296.2L171.0 293.4L170.5 290.8L170.0 290.0L169.5 287.7L169.0 287.1L168.5 287.8L168.0 288.4L167.8 289.6L167.5 293.0L167.2 289.2L167.0 288.7L166.5 287.4L166.0 288.2L165.5 290.4L165.0 290.6L164.8 292.8L164.5 298.0L164.2 293.5L164.0 290.5Z" fill="#4cbe62" stroke="#4cbe62" stroke-width="0.6" stroke-linejoin="round"/>
  <rect x="164" y="244.700" width="804.500" height="1.600" fill="#b9bc84"/>
  <rect x="164" y="281.800" width="804.500" height="1.800" fill="#86dba0"/>
</svg>

<!-- track header -->
<svg class="a" style="left:55px;top:151px" width="12" height="10" viewBox="0 0 12 10" stroke="#c0c0c0" stroke-width="1.100"><path d="M0 5h12M2 3.500v3M4 1.500v7M6 3v4M8 2v6M10 4v2"/></svg>
<div class="t" style="transform:scaleX(0.891);transform-origin:0 0;left:71px;top:151px;font-size:9.500px;color:#9c9c9c">Track 11</div>
<div class="a" style="left:110px;top:148.500px;width:14.500px;height:14.500px;background:#1b1b1b;border:1px solid #2e2e2e;border-radius:2px"></div>
<div class="a" style="left:127.500px;top:148.500px;width:14.500px;height:14.500px;background:#1b1b1b;border:1px solid #2e2e2e;border-radius:2px"></div>
<div class="a" style="left:145px;top:148.500px;width:14.500px;height:14.500px;background:#1b1b1b;border:1px solid #2e2e2e;border-radius:2px"></div>
<div class="t" style="left:113.500px;top:152px;font-size:8.500px;color:#b0b0b0">M</div>
<div class="t" style="left:132px;top:152px;font-size:8.500px;color:#b0b0b0">S</div>
<div class="t" style="left:149.500px;top:152px;font-size:8.500px;color:#b0b0b0">R</div>
<!-- volume -->
<svg class="a" style="left:52px;top:168px" width="13" height="11" viewBox="0 0 13 11" stroke="#b0b0b0" stroke-width="1.300"><path d="M1 10.500v-1M3 10.500v-2M5 10.500v-3M7 10.500v-4.500M9 10.500v-6.500M11.500 10.500v-10"/></svg>
<svg class="a" style="left:68px;top:166.500px" width="16" height="16" viewBox="0 0 16 16" fill="none" stroke="#a8a8a8" stroke-width="1.300"><circle cx="8" cy="8" r="6.500"/><path d="M8 2v6"/></svg>
<div class="t" style="transform:scaleX(0.885);transform-origin:0 0;left:87px;top:170px;font-size:9.500px;color:#2d8ceb">+0</div>
<!-- meter -->
<div class="a" style="left:145.500px;top:171px;width:13.500px;height:236px;background:#1b1b1b;border:1px solid #0c0c0c"></div>
<div class="a" style="left:152px;top:171px;width:1px;height:6px;background:#0c0c0c"></div>
<div class="a" style="left:146px;top:176.500px;width:13px;height:1px;background:#0c0c0c"></div>
<div class="a" style="left:146.800px;top:403.500px;width:5.400px;height:1.800px;background:#b8ac1c"></div>
<div class="a" style="left:153px;top:403.500px;width:5.300px;height:1.800px;background:#b8ac1c"></div>
<!-- routing -->
<svg class="a" style="left:53px;top:187px" width="10" height="9" viewBox="0 0 10 9" fill="none" stroke="#d0d0d0" stroke-width="1.400"><path d="M0 4.500h9M6 1.500l3 3-3 3"/></svg>
<div class="a" style="left:66.500px;top:185px;width:57.500px;height:14.500px;background:#1c1c1c;border:1px solid #2c2c2c;border-radius:2px"></div>
<div class="a" style="left:71px;top:186px;width:40px;height:13px;overflow:hidden"><div class="t" style="transform:scaleX(0.915);transform-origin:0 0;left:0;top:1.500px;font-size:9.500px;color:#d0d0d0">Standard-S</div></div>
<svg class="a" style="left:114px;top:188.500px" width="5" height="8" viewBox="0 0 5 8" fill="none" stroke="#b0b0b0" stroke-width="1.100"><path d="M1 0.800l3 3.200-3 3.200"/></svg>
<div class="a" style="left:127.500px;top:185px;width:14.500px;height:14.500px;background:#1c1c1c;border:1px solid #2c2c2c;border-radius:2px"></div>
<svg class="a" style="left:130px;top:187.500px" width="10" height="10" viewBox="0 0 10 10" fill="none" stroke="#b8b8b8" stroke-width="1.100"><circle cx="5" cy="5" r="3.300"/><path d="M1.200 9l7.600-8"/></svg>
<svg class="a" style="left:53px;top:204.500px" width="10" height="9" viewBox="0 0 10 9" fill="none" stroke="#d0d0d0" stroke-width="1.400"><path d="M10 4.500h-9M4 1.500l-3 3 3 3"/></svg>
<div class="a" style="left:66.500px;top:203px;width:75.500px;height:14.500px;background:#1c1c1c;border:1px solid #2c2c2c;border-radius:2px"></div>
<div class="t" style="transform:scaleX(0.913);transform-origin:0 0;left:71px;top:205.500px;font-size:9.500px;color:#d0d0d0">Mix</div>
<svg class="a" style="left:132px;top:206.500px" width="5" height="8" viewBox="0 0 5 8" fill="none" stroke="#b0b0b0" stroke-width="1.100"><path d="M1 0.800l3 3.200-3 3.200"/></svg>
<!-- Lesen -->
<svg class="a" style="left:53px;top:393.500px" width="5" height="8" viewBox="0 0 5 8" fill="none" stroke="#b0b0b0" stroke-width="1"><path d="M1 0.800l3 3.200-3 3.200"/></svg>
<div class="a" style="left:66px;top:391.500px;width:76px;height:14.500px;background:#1c1c1c;border:1px solid #2c2c2c;border-radius:2px"></div>
<div class="t" style="transform:scaleX(0.850);transform-origin:0 0;left:71px;top:394px;font-size:9.500px;color:#d0d0d0">Lesen</div>
<svg class="a" style="left:130.500px;top:396px" width="8" height="5" viewBox="0 0 8 5" fill="none" stroke="#b0b0b0" stroke-width="1.100"><path d="M0.800 1l3.200 3 3.200-3"/></svg>

<!-- transport row -->
<div class="t" style="transform:scaleX(0.978);transform-origin:0 0;left:42.200px;top:419.700px;font-size:13.400px;color:#2d8ceb;-webkit-text-stroke:0.25px #2d8ceb">18:11.115</div>
<svg class="a" style="left:336px;top:416px" width="232" height="20" viewBox="336 416 232 20">
  <rect x="340.800" y="421.300" width="7.400" height="7.400" fill="#5a5a5a"/>
  <path d="M364 420.800v9l7.800-4.500z" fill="#d0d0d0"/>
  <path d="M388.300 421.300h2.300v7.800h-2.300zM392.600 421.300h2.300v7.800h-2.300z" fill="#4e4e4e"/>
  <path d="M410.500 421h1.800v8.500h-1.800zM419.500 421v8.500l-6.500-4.250z" fill="#d0d0d0"/>
  <path d="M439.200 422v7l-6-3.500zM445.500 422v7l-6-3.500z" fill="#d0d0d0"/>
  <path d="M455.500 422v7l6-3.500zM461.800 422v7l6-3.500z" fill="#d0d0d0"/>
  <path d="M481.300 421v8.500l6.500-4.250zM489 421h1.800v8.500h-1.800z" fill="#d0d0d0"/>
  <circle cx="509" cy="425.500" r="4.500" fill="#ee3a3e"/>
  <path d="M527.500 424.300v5h10v-5M530.700 426.800v-3.400h3.500" fill="none" stroke="#d0d0d0" stroke-width="1.400"/><path d="M533.500 420.500l3.800 2.900-3.800 2.900z" fill="#d0d0d0"/>
  <path d="M551.500 422.500l-2 3 2 3M554 421.500v8M556 425.500h4M558.500 423l3.500 2.500-3.500 2.500z" fill="none" stroke="#d0d0d0" stroke-width="1.100"/>
</svg>
<svg class="a" style="left:744px;top:414px" width="240" height="24" viewBox="744 414 240 24" fill="none" stroke="#bcbcbc" stroke-width="1.100"><path d="M750.25 420.00V430.50"/><path d="M750.25 419.00l-1.500 2h3zM750.25 431.50l-1.500 -2h3z" fill="#bcbcbc" stroke="none"/><circle cx="755.90" cy="425.00" r="2.90"/><path d="M757.93 427.03L761.50 430.40" stroke-width="1.500"/><path d="M754.30 425.00h3.20" stroke-width="0.900"/><path d="M755.90 423.40v3.20" stroke-width="0.900"/><path d="M773.60 420.00V430.50"/><path d="M773.60 419.00l-1.500 2h3zM773.60 431.50l-1.500 -2h3z" fill="#bcbcbc" stroke="none"/><circle cx="779.25" cy="425.00" r="2.90"/><path d="M781.28 427.03L784.85 430.40" stroke-width="1.500"/><path d="M777.65 425.00h3.20" stroke-width="0.900"/><path d="M796.00 420.00H808.00"/><path d="M795.00 420.00l2 -1.500v3zM809.00 420.00l-2 -1.500v3z" fill="#bcbcbc" stroke="none"/><circle cx="801.50" cy="425.90" r="2.90"/><path d="M803.53 427.93L807.10 431.30" stroke-width="1.500"/><path d="M799.90 425.90h3.20" stroke-width="0.900"/><path d="M801.50 424.30v3.20" stroke-width="0.900"/><path d="M820.00 420.00H832.00"/><path d="M819.00 420.00l2 -1.500v3zM833.00 420.00l-2 -1.500v3z" fill="#bcbcbc" stroke="none"/><circle cx="825.25" cy="425.90" r="2.90"/><path d="M827.28 427.93L830.85 431.30" stroke-width="1.500"/><path d="M823.65 425.90h3.20" stroke-width="0.900"/><circle cx="848.50" cy="425.00" r="2.90"/><path d="M850.53 427.03L854.10 430.40" stroke-width="1.500"/><path d="M846.90 425.00h3.20" stroke-width="0.900"/><path d="M848.50 418.80l-1.400 1.600h2.800zM848.50 431.40l-1.400 -1.600h2.800zM842.10 425.00l1.600 -1.400v2.800zM854.90 425.00l-1.600 -1.400v2.800z" fill="#bcbcbc" stroke="none"/><path d="M867.90 421.50c-1.200 0 -1.200 0.500 -1.200 1.500v1.500c0 0.800 -0.300 1.200 -1 1.400c0.700 0.200 1 0.600 1 1.400v1.500c0 1 0 1.500 1.200 1.500" stroke-width="0.900"/><circle cx="875.60" cy="425.90" r="2.90"/><path d="M877.63 427.93L881.20 431.30" stroke-width="1.500"/><path d="M891.25 421.50c1.200 0 1.200 0.500 1.200 1.500v1.500c0 0.800 0.300 1.200 1 1.400c-0.700 0.200 -1 0.600 -1 1.400v1.500c0 1 0 1.500 -1.200 1.500" stroke-width="0.900"/><circle cx="898.75" cy="425.90" r="2.90"/><path d="M900.78 427.93L904.35 431.30" stroke-width="1.500"/><path d="M912.90 421.50c-1.200 0 -1.200 0.500 -1.200 1.500v1.500c0 0.800 -0.300 1.200 -1 1.400c0.700 0.200 1 0.600 1 1.400v1.500c0 1 0 1.500 1.200 1.500" stroke-width="0.900"/><path d="M915.25 421.50c1.200 0 1.200 0.500 1.200 1.500v1.500c0 0.800 0.300 1.200 1 1.400c-0.700 0.200 -1 0.600 -1 1.400v1.500c0 1 0 1.500 -1.200 1.500" stroke-width="0.900"/><circle cx="922.50" cy="425.90" r="2.90"/><path d="M924.53 427.93L928.10 431.30" stroke-width="1.500"/><circle cx="943.500" cy="426.800" r="4.200" stroke-width="1.200"/><path d="M943.500 426.800v-3.200M943.500 426.800h2.600" stroke-width="1"/><path d="M942 420h3M943.500 420v2" stroke-width="1.100"/><path d="M938.200 423.200l2.600-2.400l0.300 2.800z" fill="#bcbcbc" stroke="none"/><path d="M960.200 419.600h3.400M960.200 431.500h3.400M961.900 419.600V431.500" stroke-width="1.100"/><circle cx="967.75" cy="425.90" r="2.90"/><path d="M969.78 427.93L973.35 431.30" stroke-width="1.500"/><path d="M966.15 425.90h3.20" stroke-width="0.900"/><path d="M967.75 424.30v3.20" stroke-width="0.900"/></svg>


<!-- right strip -->
<div class="a panel" style="left:993px;top:57px;width:31px;height:383px"></div>
<div class="a" style="left:993px;top:79.500px;width:31px;height:1px;background:#2e2e2e"></div>
<div class="a" style="left:993px;top:103.500px;width:31px;height:1px;background:#2e2e2e"></div>
<div class="a" style="left:993px;top:132px;width:31px;height:1px;background:#2e2e2e"></div>
<div class="a" style="left:993px;top:157.500px;width:31px;height:1px;background:#2e2e2e"></div>
<div class="t" style="left:1003.500px;top:63.500px;font-size:9px;color:#d8d8d8;width:5px;overflow:hidden;font-weight:bold">E</div>
<div class="t" style="left:1003px;top:88.500px;font-size:9.500px;color:#a0a0a0">Motc</div>
<div class="t" style="left:1003px;top:112.500px;font-size:9.500px;color:#a0a0a0">Vorg:</div>
<div class="t" style="left:1011px;top:178px;font-size:11.500px;color:#555;line-height:14.500px;white-space:normal;width:20px">We die Au</div>
<div class="a" style="left:1011.500px;top:229px;width:13px;height:22px;background:#1c1c1c;border:1px solid #2a2a2a;border-right:0"></div>
<div class="a" style="left:1011.500px;top:261px;width:13px;height:22px;background:#1c1c1c;border:1px solid #2a2a2a;border-right:0"></div>
<div class="a" style="left:1011.500px;top:293px;width:13px;height:22px;background:#1c1c1c;border:1px solid #2a2a2a;border-right:0"></div>
<div class="a" style="left:1011.500px;top:325px;width:13px;height:22px;background:#1c1c1c;border:1px solid #2a2a2a;border-right:0"></div>
<div class="a" style="left:994.500px;top:429.500px;width:30px;height:10px;background:#282828"></div>


<!-- bottom panels -->
<div class="a panel" style="left:33px;top:442.500px;width:767px;height:77px"></div>
<div class="a panel" style="left:803px;top:442.500px;width:221px;height:77px"></div>
<div class="t" style="transform:scaleX(0.884);transform-origin:0 0;left:42.500px;top:450px;font-size:9.500px;color:#b8b8b8">Pegel</div>
<svg class="a" style="left:72px;top:451px" width="8" height="7" viewBox="0 0 8 7"><path d="M0.500 1h7M0.500 3.500h7M0.500 6h7" stroke="#a8a8a8" stroke-width="1"/></svg>
<div class="a" style="left:37.500px;top:469px;width:757.700px;height:34.500px;background:#1b1b1b;border:1px solid #0a0a0a;border-top-width:1.500px"></div>
<div class="a" style="left:38.400px;top:470.500px;width:1.200px;height:15px;background:#a89a00"></div>
<div class="a" style="left:38.400px;top:486.500px;width:1.200px;height:16px;background:#a89a00"></div>
<div class="a" style="left:787.800px;top:470px;width:6.800px;height:16px;background:#e8403e"></div>
<div class="a" style="left:787.800px;top:487.300px;width:6.800px;height:15.700px;background:#e8403e"></div>
<div class="a" style="left:38.3px;top:504px;width:1px;height:3px;background:#9a9a9a"></div><div class="a" style="left:50.8px;top:504px;width:1px;height:1.500px;background:#777"></div><div class="a" style="left:63.2px;top:504px;width:1px;height:1.500px;background:#777"></div><div class="t" style="transform:scaleX(0.817);transform-origin:0 0;left:37.5px;top:509.300px;font-size:8.500px;color:#8e8e8e">dB</div><div class="a" style="left:75.7px;top:504px;width:1px;height:3px;background:#9a9a9a"></div><div class="a" style="left:88.1px;top:504px;width:1px;height:1.500px;background:#777"></div><div class="a" style="left:100.6px;top:504px;width:1px;height:1.500px;background:#777"></div><div class="t" style="transform:scaleX(0.915);transform-origin:0 0;left:70.8px;top:509.300px;font-size:8.500px;color:#8e8e8e">-57</div><div class="a" style="left:113.1px;top:504px;width:1px;height:3px;background:#9a9a9a"></div><div class="a" style="left:125.5px;top:504px;width:1px;height:1.500px;background:#777"></div><div class="a" style="left:138.0px;top:504px;width:1px;height:1.500px;background:#777"></div><div class="t" style="transform:scaleX(0.915);transform-origin:0 0;left:108.2px;top:509.300px;font-size:8.500px;color:#8e8e8e">-54</div><div class="a" style="left:150.5px;top:504px;width:1px;height:3px;background:#9a9a9a"></div><div class="a" style="left:162.9px;top:504px;width:1px;height:1.500px;background:#777"></div><div class="a" style="left:175.4px;top:504px;width:1px;height:1.500px;background:#777"></div><div class="t" style="transform:scaleX(0.915);transform-origin:0 0;left:145.5px;top:509.300px;font-size:8.500px;color:#8e8e8e">-51</div><div class="a" style="left:187.9px;top:504px;width:1px;height:3px;background:#9a9a9a"></div><div class="a" style="left:200.3px;top:504px;width:1px;height:1.500px;background:#777"></div><div class="a" style="left:212.8px;top:504px;width:1px;height:1.500px;background:#777"></div><div class="t" style="transform:scaleX(0.915);transform-origin:0 0;left:182.9px;top:509.300px;font-size:8.500px;color:#8e8e8e">-48</div><div class="a" style="left:225.2px;top:504px;width:1px;height:3px;background:#9a9a9a"></div><div class="a" style="left:237.7px;top:504px;width:1px;height:1.500px;background:#777"></div><div class="a" style="left:250.2px;top:504px;width:1px;height:1.500px;background:#777"></div><div class="t" style="transform:scaleX(0.915);transform-origin:0 0;left:220.3px;top:509.300px;font-size:8.500px;color:#8e8e8e">-45</div><div class="a" style="left:262.6px;top:504px;width:1px;height:3px;background:#9a9a9a"></div><div class="a" style="left:275.1px;top:504px;width:1px;height:1.500px;background:#777"></div><div class="a" style="left:287.5px;top:504px;width:1px;height:1.500px;background:#777"></div><div class="t" style="transform:scaleX(0.915);transform-origin:0 0;left:257.7px;top:509.300px;font-size:8.500px;color:#8e8e8e">-42</div><div class="a" style="left:300.0px;top:504px;width:1px;height:3px;background:#9a9a9a"></div><div class="a" style="left:312.5px;top:504px;width:1px;height:1.500px;background:#777"></div><div class="a" style="left:324.9px;top:504px;width:1px;height:1.500px;background:#777"></div><div class="t" style="transform:scaleX(0.915);transform-origin:0 0;left:295.1px;top:509.300px;font-size:8.500px;color:#8e8e8e">-39</div><div class="a" style="left:337.4px;top:504px;width:1px;height:3px;background:#9a9a9a"></div><div class="a" style="left:349.9px;top:504px;width:1px;height:1.500px;background:#777"></div><div class="a" style="left:362.3px;top:504px;width:1px;height:1.500px;background:#777"></div><div class="t" style="transform:scaleX(0.915);transform-origin:0 0;left:332.5px;top:509.300px;font-size:8.500px;color:#8e8e8e">-36</div><div class="a" style="left:374.8px;top:504px;width:1px;height:3px;background:#9a9a9a"></div><div class="a" style="left:387.3px;top:504px;width:1px;height:1.500px;background:#777"></div><div class="a" style="left:399.7px;top:504px;width:1px;height:1.500px;background:#777"></div><div class="t" style="transform:scaleX(0.915);transform-origin:0 0;left:369.9px;top:509.300px;font-size:8.500px;color:#8e8e8e">-33</div><div class="a" style="left:412.2px;top:504px;width:1px;height:3px;background:#9a9a9a"></div><div class="a" style="left:424.6px;top:504px;width:1px;height:1.500px;background:#777"></div><div class="a" style="left:437.1px;top:504px;width:1px;height:1.500px;background:#777"></div><div class="t" style="transform:scaleX(0.915);transform-origin:0 0;left:407.3px;top:509.300px;font-size:8.500px;color:#8e8e8e">-30</div><div class="a" style="left:449.6px;top:504px;width:1px;height:3px;background:#9a9a9a"></div><div class="a" style="left:462.0px;top:504px;width:1px;height:1.500px;background:#777"></div><div class="a" style="left:474.5px;top:504px;width:1px;height:1.500px;background:#777"></div><div class="t" style="transform:scaleX(0.915);transform-origin:0 0;left:444.7px;top:509.300px;font-size:8.500px;color:#8e8e8e">-27</div><div class="a" style="left:487.0px;top:504px;width:1px;height:3px;background:#9a9a9a"></div><div class="a" style="left:499.4px;top:504px;width:1px;height:1.500px;background:#777"></div><div class="a" style="left:511.9px;top:504px;width:1px;height:1.500px;background:#777"></div><div class="t" style="transform:scaleX(0.915);transform-origin:0 0;left:482.1px;top:509.300px;font-size:8.500px;color:#8e8e8e">-24</div><div class="a" style="left:524.4px;top:504px;width:1px;height:3px;background:#9a9a9a"></div><div class="a" style="left:536.8px;top:504px;width:1px;height:1.500px;background:#777"></div><div class="a" style="left:549.3px;top:504px;width:1px;height:1.500px;background:#777"></div><div class="t" style="transform:scaleX(0.915);transform-origin:0 0;left:519.4px;top:509.300px;font-size:8.500px;color:#8e8e8e">-21</div><div class="a" style="left:561.8px;top:504px;width:1px;height:3px;background:#9a9a9a"></div><div class="a" style="left:574.2px;top:504px;width:1px;height:1.500px;background:#777"></div><div class="a" style="left:586.7px;top:504px;width:1px;height:1.500px;background:#777"></div><div class="t" style="transform:scaleX(0.915);transform-origin:0 0;left:556.8px;top:509.300px;font-size:8.500px;color:#8e8e8e">-18</div><div class="a" style="left:599.1px;top:504px;width:1px;height:3px;background:#9a9a9a"></div><div class="a" style="left:611.6px;top:504px;width:1px;height:1.500px;background:#777"></div><div class="a" style="left:624.0px;top:504px;width:1px;height:1.500px;background:#777"></div><div class="t" style="transform:scaleX(0.915);transform-origin:0 0;left:594.2px;top:509.300px;font-size:8.500px;color:#8e8e8e">-15</div><div class="a" style="left:636.5px;top:504px;width:1px;height:3px;background:#9a9a9a"></div><div class="a" style="left:649.0px;top:504px;width:1px;height:1.500px;background:#777"></div><div class="a" style="left:661.4px;top:504px;width:1px;height:1.500px;background:#777"></div><div class="t" style="transform:scaleX(0.915);transform-origin:0 0;left:631.6px;top:509.300px;font-size:8.500px;color:#8e8e8e">-12</div><div class="a" style="left:673.9px;top:504px;width:1px;height:3px;background:#9a9a9a"></div><div class="a" style="left:686.4px;top:504px;width:1px;height:1.500px;background:#777"></div><div class="a" style="left:698.8px;top:504px;width:1px;height:1.500px;background:#777"></div><div class="t" style="transform:scaleX(1.058);transform-origin:0 0;left:670.6px;top:509.300px;font-size:8.500px;color:#8e8e8e">-9</div><div class="a" style="left:711.3px;top:504px;width:1px;height:3px;background:#9a9a9a"></div><div class="a" style="left:723.8px;top:504px;width:1px;height:1.500px;background:#777"></div><div class="a" style="left:736.2px;top:504px;width:1px;height:1.500px;background:#777"></div><div class="t" style="transform:scaleX(1.058);transform-origin:0 0;left:708.0px;top:509.300px;font-size:8.500px;color:#8e8e8e">-6</div><div class="a" style="left:748.7px;top:504px;width:1px;height:3px;background:#9a9a9a"></div><div class="a" style="left:761.2px;top:504px;width:1px;height:1.500px;background:#777"></div><div class="a" style="left:773.6px;top:504px;width:1px;height:1.500px;background:#777"></div><div class="t" style="transform:scaleX(1.058);transform-origin:0 0;left:745.4px;top:509.300px;font-size:8.500px;color:#8e8e8e">-3</div><div class="a" style="left:786.1px;top:504px;width:1px;height:3px;background:#9a9a9a"></div><div class="t" style="transform:scaleX(0.950);transform-origin:0 0;left:784.5px;top:509.300px;font-size:8.500px;color:#8e8e8e">0</div>
<div class="t" style="transform:scaleX(0.933);transform-origin:0 0;left:813px;top:450px;font-size:9.500px;color:#c8c8c8">Auswahl/Ansicht</div>
<svg class="a" style="left:885.500px;top:451px" width="8" height="7" viewBox="0 0 8 7"><path d="M0.500 1h7M0.500 3.500h7M0.500 6h7" stroke="#a8a8a8" stroke-width="1"/></svg>
<div class="t lbl" style="transform:scaleX(0.897);transform-origin:0 0;left:849px;top:469.600px">Start</div>
<div class="t lbl" style="transform:scaleX(0.856);transform-origin:0 0;left:907px;top:469.600px">Ende</div>
<div class="t lbl" style="transform:scaleX(0.918);transform-origin:0 0;left:963.500px;top:469.600px">Dauer</div>
<div class="t lbl" style="transform:scaleX(0.905);transform-origin:0 0;left:811.500px;top:484.600px">Auswahl</div>
<div class="t lbl" style="transform:scaleX(0.923);transform-origin:0 0;left:811.500px;top:501.900px">Ansicht</div>
<div class="t blue" style="transform:scaleX(0.930);transform-origin:0 0;left:851px;top:484.600px;font-size:9.500px">18:11.115</div>
<div class="t blue" style="transform:scaleX(0.918);transform-origin:0 0;left:908.500px;top:484.600px;font-size:9.500px">18:11.115</div>
<div class="t blue" style="transform:scaleX(0.892);transform-origin:0 0;left:965px;top:484.600px;font-size:9.500px">0:00.000</div>
<div class="t blue" style="transform:scaleX(0.899);transform-origin:0 0;left:851px;top:501.900px;font-size:9.500px">17:39.603</div>
<div class="t blue" style="transform:scaleX(0.899);transform-origin:0 0;left:908.500px;top:501.900px;font-size:9.500px">17:57.548</div>
<div class="t blue" style="transform:scaleX(0.892);transform-origin:0 0;left:965px;top:501.900px;font-size:9.500px">0:17.944</div>


<!-- status -->
<div class="a" style="left:1px;top:522.300px;width:1023px;height:15.200px;background:#242424"></div>
<div class="t" style="transform:scaleX(0.915);transform-origin:0 0;left:6px;top:525px;font-size:9.500px;color:#969696">Speichert Wiederherstellungsdaten automatisch abgeschlossen in 0.09 Sekunden</div>
<div class="a" style="left:534.500px;top:524px;width:1px;height:10px;background:#333"></div>
<div class="a" style="left:574.500px;top:524px;width:1px;height:10px;background:#333"></div>
<div class="a" style="left:711px;top:524px;width:1px;height:10px;background:#333"></div>
<div class="a" style="left:810.500px;top:524px;width:1px;height:10px;background:#333"></div>
<div class="a" style="left:865.500px;top:524px;width:1px;height:10px;background:#333"></div>
<div class="a" style="left:923px;top:524px;width:1px;height:10px;background:#333"></div>
<div class="a" style="left:985.500px;top:524px;width:1px;height:10px;background:#333"></div>
<div class="t" style="transform:scaleX(0.983);transform-origin:0 0;left:718.600px;top:527px;font-size:9px;color:#8c8c8c">48000 Hz ● 32-Bit Mix</div>
<div class="t" style="transform:scaleX(0.959);transform-origin:0 0;left:817.500px;top:527px;font-size:9px;color:#8c8c8c">824.92 MB</div>
<div class="t" style="transform:scaleX(0.949);transform-origin:0 0;left:879px;top:527px;font-size:9px;color:#8c8c8c">37:32.585</div>
<div class="t" style="transform:scaleX(0.933);transform-origin:0 0;left:929.500px;top:527px;font-size:9px;color:#8c8c8c">36.53 GB frei</div>


<!-- taskbar -->
<div class="a" style="left:0;top:537.500px;width:1024px;height:38.500px;background:linear-gradient(90deg,#1b1f29 0%,#1c202a 38%,#25261f 46%,#2a2a1a 49.500%,#22301f 54%,#1b3322 59%,#1b3023 62.500%,#1c2a2a 64.500%,#1c2430 66.500%,#1e222a 69.500%,#1f2024 72%,#202124 100%)"></div>
<div class="a" style="left:0;top:537px;width:1024px;height:1.200px;background:#3a3a3c"></div>
<!-- weather -->
<svg class="a" style="left:14px;top:543px" width="24" height="28" viewBox="0 0 24 28">
  <ellipse cx="9" cy="14" rx="6" ry="5" fill="#c8d4e6"/><ellipse cx="15" cy="12" rx="6.500" ry="6" fill="#dfe6f2"/><ellipse cx="6" cy="17" rx="5" ry="4" fill="#aebfd8"/><ellipse cx="15" cy="17" rx="6" ry="4" fill="#c0cee2"/>
  <ellipse cx="8" cy="22" rx="1.600" ry="2.200" fill="#3a8ae0"/>
  <path d="M17 17.500v7M13.800 19.300l6.400 3.500M20.200 19.300l-6.400 3.500" stroke="#2a7ad8" stroke-width="1.200"/>
</svg>
<div class="a" style="left:24.400px;top:543.300px;width:12.400px;height:12.400px;border-radius:6.200px;background:#d3262b"></div>
<div class="t ns" style="left:28.200px;top:545px;font-size:9.500px;color:#fff">1</div>
<div class="t ns" style="transform:scaleX(0.866);transform-origin:0 0;left:40.750px;top:546px;font-size:9.800px;color:#f4f4f4">2°C</div>
<div class="t ns" style="transform:scaleX(0.965);transform-origin:0 0;left:40.750px;top:558.500px;font-size:9.800px;color:#e8e8e8">Reg/Schn leicht</div>
<!-- windows -->
<svg class="a" style="left:191px;top:547.500px" width="19" height="19" viewBox="0 0 19 19">
 <defs><linearGradient id="wg" x1="0" y1="0" x2="1" y2="1"><stop offset="0" stop-color="#6ad2fc"/><stop offset="1" stop-color="#1496ee"/></linearGradient></defs>
 <rect x="0" y="0" width="9" height="9" fill="url(#wg)"/><rect x="10" y="0" width="9" height="9" fill="url(#wg)"/><rect x="0" y="10" width="9" height="9" fill="url(#wg)"/><rect x="10" y="10" width="9" height="9" fill="url(#wg)"/>
</svg>
<!-- search -->
<div class="a" style="left:222px;top:545px;width:173.500px;height:23.500px;border-radius:12px;background:#f2f2f2"></div>
<svg class="a" style="left:230px;top:550.500px" width="13" height="13" viewBox="0 0 13 13" fill="none" stroke="#222" stroke-width="1.400"><circle cx="5.300" cy="5.300" r="4"/><path d="M8.300 8.300l4 4"/></svg>
<div class="t ns" style="transform:scaleX(0.991);transform-origin:0 0;left:251px;top:551.500px;font-size:10.500px;color:#555">Suche</div>
<svg class="a" style="left:376px;top:548.500px" width="17" height="17" viewBox="0 0 17 17"><circle cx="8.500" cy="8" r="7" fill="#fff" stroke="#2a8ae8" stroke-width="1.300"/><path d="M3.500 13l-0.500 3 3.500-1.800z" fill="#2a8ae8"/><path d="M7 3.500v7.500l3.300-1.700-2.300-1.300 2.800 0.600" fill="none" stroke="#1a6ae0" stroke-width="1.300"/></svg>
<!-- task view -->
<div class="a" style="left:406px;top:553.500px;width:14px;height:12.500px;background:#6a6a6a;border-radius:1.500px"></div>
<div class="a" style="left:411px;top:548px;width:15px;height:13px;background:#e8e8e8;border-radius:1.500px"></div>
<div class="a" style="left:411px;top:553.500px;width:9px;height:7.500px;background:#a8a8a8"></div>
<!-- chat -->
<svg class="a" style="left:441px;top:547px" width="20" height="21" viewBox="0 0 20 21"><defs><linearGradient id="cg" x1="0" y1="0" x2="1" y2="1"><stop offset="0" stop-color="#9a7ae8"/><stop offset="1" stop-color="#5a4ab8"/></linearGradient></defs><circle cx="10" cy="9.500" r="9.200" fill="url(#cg)"/><path d="M2.500 14l-1.500 5.500 6-2z" fill="#5a4ab8"/><rect x="5" y="6.500" width="7.500" height="6" rx="1.200" fill="#fff"/><path d="M12.800 9l3-2v5l-3-2z" fill="#fff"/></svg>
<!-- folder -->
<svg class="a" style="left:476px;top:547.500px" width="21" height="19" viewBox="0 0 21 19"><path d="M0.500 2.500a1.500 1.500 0 0 1 1.500-1.500h5l2 2.500h10a1.500 1.500 0 0 1 1.500 1.500v12.500h-20z" fill="#e8a81e"/><path d="M0.500 6.500h20v11a1 1 0 0 1 -1 1h-18a1 1 0 0 1 -1-1z" fill="#fcd04a"/><rect x="4.500" y="12.500" width="12" height="6" rx="1" fill="#1a78d8"/><rect x="7" y="14.500" width="7" height="1.500" fill="#7ac0f8"/></svg>
<!-- word -->
<svg class="a" style="left:511.500px;top:547.500px" width="20" height="19" viewBox="0 0 20 19"><rect x="5" y="0.500" width="14.500" height="18" rx="1.500" fill="#2b7cd3"/><rect x="5" y="0.500" width="14.500" height="4.500" fill="#41a5ee"/><rect x="5" y="9.500" width="14.500" height="4.500" fill="#185abd"/><rect x="5" y="14" width="14.500" height="4.500" rx="1" fill="#103f91"/><rect x="0" y="4.500" width="10.500" height="10.500" rx="1" fill="#185abd"/><path d="M2.200 7.200l1.400 5.200 1.600-5 1.600 5 1.400-5.200" fill="none" stroke="#fff" stroke-width="1.100"/></svg>
<!-- edge -->
<svg class="a" style="left:546.500px;top:547px" width="21" height="21" viewBox="0 0 21 21"><defs><linearGradient id="eg" x1="0" y1="0" x2="1" y2="0.600"><stop offset="0" stop-color="#1a9ae0"/><stop offset="0.600" stop-color="#2ac08a"/><stop offset="1" stop-color="#6ad848"/></linearGradient></defs><circle cx="10.500" cy="10.500" r="10" fill="#0c5aa8"/><path d="M0.500 10.500a10 10 0 0 1 20 -1.500c0 3-2.500 4.500-5 4.500-2 0-3-1-3-2 0-1 0.800-1.500 0.800-2.500 0-1.500-1.800-3-4.300-3-4 0-8 3-8.500 4.500z" fill="url(#eg)"/><path d="M7 10c-1.500 1.500-1.500 5 1 7.500 2 2 5.500 2.500 8 1-4 0.500-7.500-2-7.500-5.500 0-1.200 0.300-2 0.800-2.800z" fill="#1a78d0"/><path d="M8 12c0 3 2.500 5.500 6 5.500 1.500 0 3-0.500 4-1.300-1.500 2.700-4.500 4.300-7.500 4.300a10 10 0 0 1 -10-10c1-3 4-5 7.500-5-2 1-3.500 3.500-3 6.500z" fill="#0c6ac0" opacity=".5"/></svg>
<!-- Br -->
<div class="a" style="left:583px;top:547.500px;width:17.600px;height:16.900px;border-radius:3.200px;background:#0b1420"></div>
<div class="t ns" style="left:585.500px;top:550.300px;font-size:10.500px;font-weight:bold;color:#fff;letter-spacing:-.3px">Br</div>
<!-- Pr -->
<div class="a" style="left:653.5px;top:547.500px;width:17.600px;height:16.900px;border-radius:3.200px;background:#00005b"></div>
<div class="t ns" style="left:656.500px;top:550.300px;font-size:10.500px;font-weight:bold;color:#9999ff;letter-spacing:-.3px">Pr</div>
<div class="a" style="left:659.500px;top:570px;width:5.500px;height:2px;border-radius:1px;background:#8a8a8a"></div>
<!-- Au -->
<div class="a" style="left:682px;top:541px;width:31.500px;height:31.500px;border-radius:4px;background:rgba(130,160,200,.13);border:1px solid rgba(255,255,255,.05)"></div>
<div class="a" style="left:688.800px;top:547.500px;width:17.600px;height:16.900px;border-radius:3.200px;background:#00005b"></div>
<div class="t ns" style="left:691px;top:550.300px;font-size:10.500px;font-weight:bold;color:#9999ff;letter-spacing:-.3px">Au</div>
<div class="a" style="left:691px;top:570px;width:13px;height:2.500px;border-radius:1.200px;background:#62c0f0"></div>
<!-- media player -->
<svg class="a" style="left:722.500px;top:546.500px" width="21" height="21" viewBox="0 0 21 21"><defs><linearGradient id="mg" x1="0" y1="0" x2="1" y2="1"><stop offset="0" stop-color="#f08a3a"/><stop offset="0.500" stop-color="#e86a8a"/><stop offset="1" stop-color="#8a5ae8"/></linearGradient></defs><circle cx="10.500" cy="10.500" r="8.800" fill="#2a2a30" stroke="url(#mg)" stroke-width="1.500"/><path d="M7.500 5.500v10l8-5z" fill="#fff"/></svg>
<div class="a" style="left:730px;top:570px;width:5.500px;height:2px;border-radius:1px;background:#8a8a8a"></div>
<!-- tray -->
<svg class="a" style="left:768.500px;top:553px" width="10" height="6" viewBox="0 0 10 6" fill="none" stroke="#f0f0f0" stroke-width="1.200"><path d="M0.800 5.200l4.200-4.200 4.200 4.200"/></svg>
<svg class="a" style="left:792px;top:550.500px" width="15" height="12" viewBox="0 0 15 12"><path d="M3.500 10.500a3 3 0 0 1 0.300-6 4 4 0 0 1 7.500 0.800 2.700 2.700 0 0 1 0.200 5.200z" fill="#9a9a9a"/><path d="M1.500 1l11.500 10.500" stroke="#d8d8d8" stroke-width="1.200"/></svg>
<svg class="a" style="left:819.500px;top:549px" width="10" height="15" viewBox="0 0 10 15" fill="none" stroke="#5ab0f0" stroke-width="1.200"><rect x="3" y="0.800" width="4" height="8" rx="2"/><path d="M1 7a4 4 0 0 0 8 0M5 11v3"/></svg>
<div class="t ns" style="transform:scaleX(0.828);transform-origin:0 0;left:846px;top:546.500px;font-size:10px;color:#f0f0f0">DEU</div>
<div class="t ns" style="transform:scaleX(0.778);transform-origin:0 0;left:848.750px;top:558.500px;font-size:10px;color:#f0f0f0">SG</div>
<svg class="a" style="left:878.500px;top:549.500px" width="15" height="15" viewBox="0 0 15 15" fill="none" stroke="#f0f0f0" stroke-width="1"><circle cx="7" cy="7" r="6"/><ellipse cx="7" cy="7" rx="2.600" ry="6"/><path d="M1 7h12M2 4h10M2 10h6"/><circle cx="10.500" cy="10.500" r="3.300" fill="#1f2023"/><path d="M8.300 12.700l4.400-4.400"/></svg>
<svg class="a" style="left:898px;top:551px" width="13" height="11" viewBox="0 0 13 11" fill="none" stroke="#f0f0f0" stroke-width="1"><path d="M0.800 3.800h2.200l3-2.800v9l-3-2.800h-2.200z"/><path d="M8 3.500a3 3 0 0 1 0 4M9.800 2a5 5 0 0 1 0 7" /><path d="M11.500 0.800a7 7 0 0 1 0 9.400" stroke="#777"/></svg>
<svg class="a" style="left:917px;top:551.500px" width="14" height="9" viewBox="0 0 14 9"><rect x="0.600" y="0.600" width="11.300" height="7.800" rx="2" fill="none" stroke="#f0f0f0" stroke-width="1.100"/><rect x="2" y="2" width="8.500" height="5" rx="1" fill="#f0f0f0"/><path d="M13 3v3" stroke="#f0f0f0" stroke-width="1.200"/></svg>
<div class="t ns" style="transform:scaleX(0.899);transform-origin:0 0;left:966.750px;top:545.500px;font-size:10px;color:#f0f0f0">17:38</div>
<div class="t ns" style="transform:scaleX(0.934);transform-origin:0 0;left:942.500px;top:558px;font-size:10px;color:#f0f0f0">01.12.2023</div>
<svg class="a" style="left:996.500px;top:549.500px" width="12" height="13" viewBox="0 0 12 13"><path d="M1 10c1-1 1.200-2.500 1.200-4.500a3.800 3.800 0 0 1 7.600 0c0 2 0.200 3.500 1.200 4.500z" fill="#f0f0f0"/><path d="M4.500 11a1.500 1.500 0 0 0 3 0z" fill="#f0f0f0"/><text x="6" y="5" font-size="5" font-family="Liberation Sans" font-weight="bold" fill="#f0f0f0">z</text></svg>

</body></html>
